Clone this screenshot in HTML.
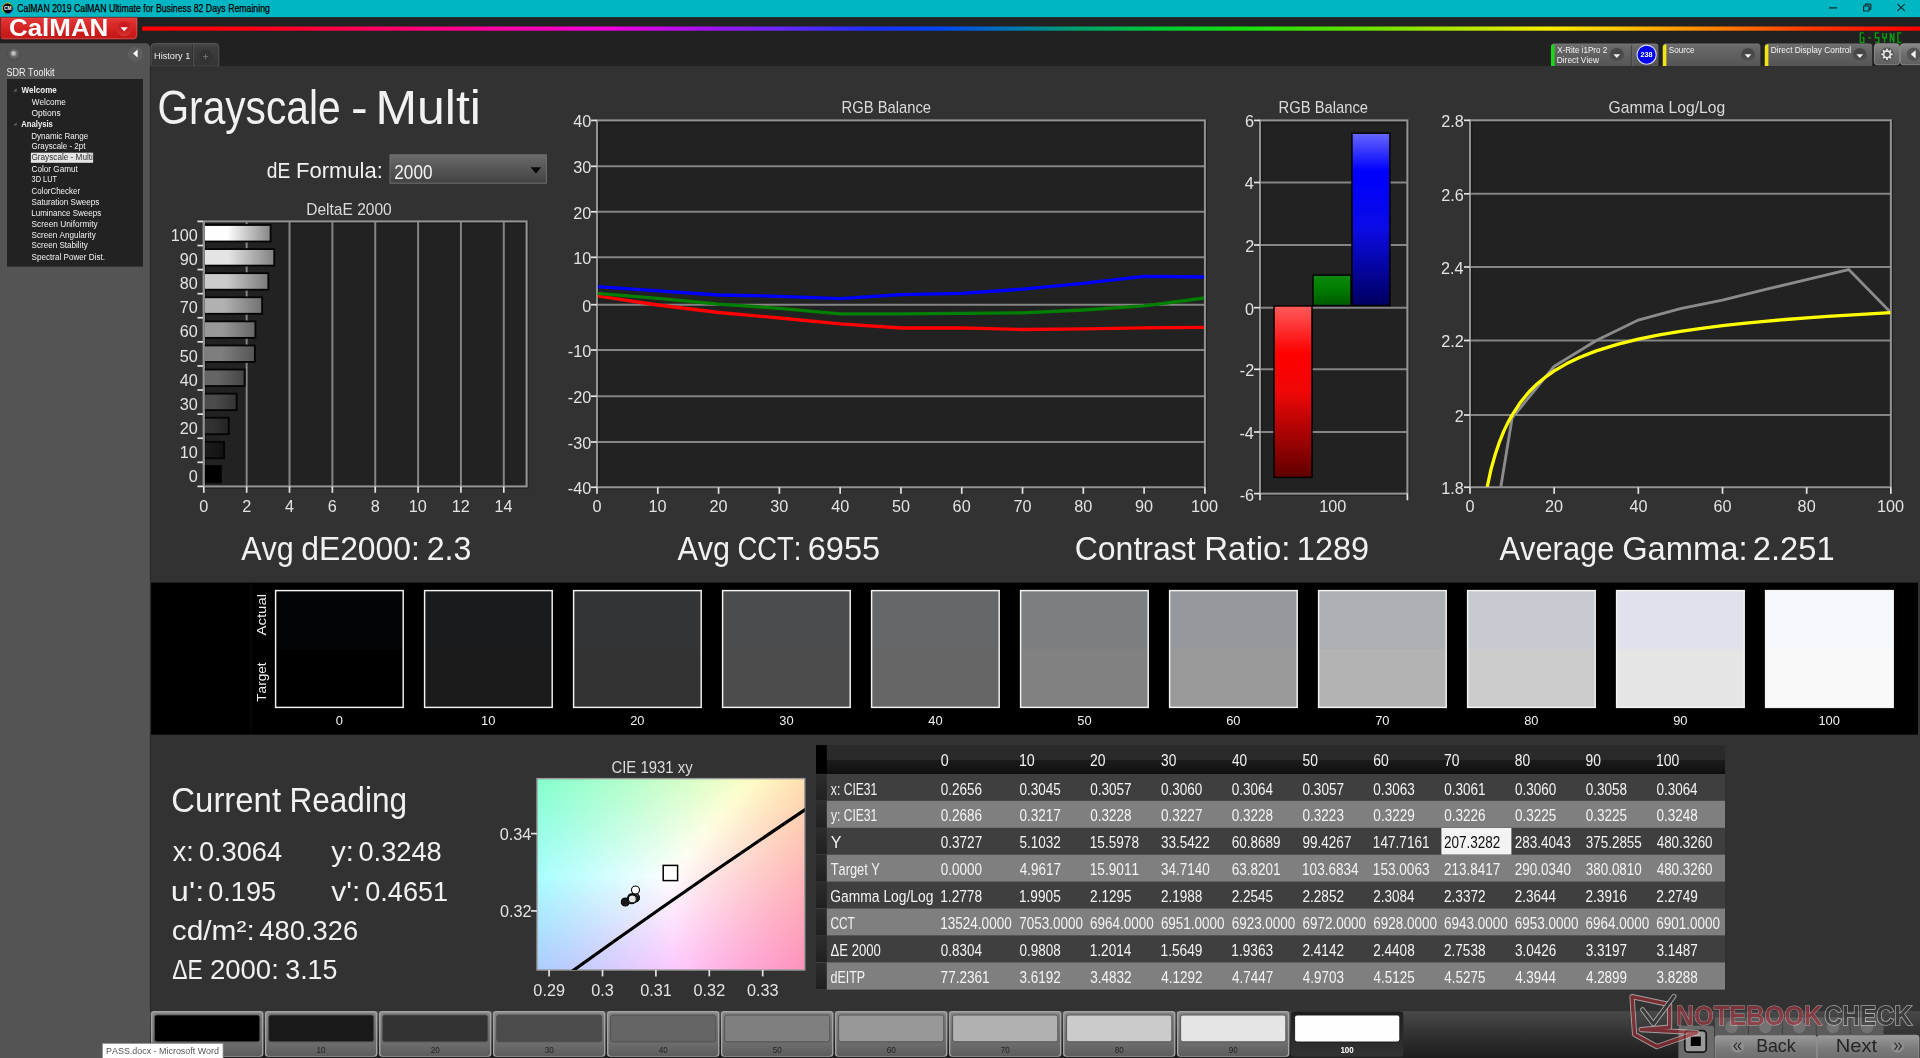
<!DOCTYPE html>
<html lang="en">
<head>
<meta charset="utf-8">
<title>CalMAN 2019 CalMAN Ultimate for Business - Grayscale - Multi</title>
<style>
html,body{margin:0;padding:0;background:#333333;overflow:hidden;}
body{width:1920px;height:1058px;font-family:"Liberation Sans",sans-serif;}
#app{position:absolute;left:0;top:0;width:1920px;height:1058px;overflow:hidden;}
svg{display:block;font-family:"Liberation Sans",sans-serif;}
svg text{font-family:"Liberation Sans",sans-serif;white-space:pre;font-kerning:none;}
</style>
</head>
<body>
<div id="app">
<svg width="1920" height="1058" viewBox="0 0 1920 1058" style="opacity:0.9999">
<defs>
<linearGradient id="icoRing" x1="0" y1="0" x2="1" y2="1">
<stop offset="0" stop-color="#ff3030"/><stop offset="0.35" stop-color="#ffe000"/><stop offset="0.6" stop-color="#20c020"/><stop offset="0.8" stop-color="#2040ff"/><stop offset="1" stop-color="#c020c0"/></linearGradient>
<linearGradient id="gRed" x1="0" y1="0" x2="0" y2="1">
<stop offset="0" stop-color="#e84848"/><stop offset="0.12" stop-color="#e03434"/><stop offset="0.55" stop-color="#d42222"/><stop offset="1" stop-color="#c41414"/></linearGradient>
<radialGradient id="gRedBtn" cx="0.5" cy="0.35" r="0.7">
<stop offset="0" stop-color="#c8101c"/><stop offset="0.7" stop-color="#d02828"/><stop offset="1" stop-color="#e04444"/></radialGradient>
<linearGradient id="gRainbow" x1="142" y1="0" x2="1920" y2="0" gradientUnits="userSpaceOnUse">
<stop offset="0" stop-color="#ff0000"/>
<stop offset="0.06" stop-color="#ff0014"/>
<stop offset="0.13" stop-color="#ff0060"/>
<stop offset="0.21" stop-color="#ff00b0"/>
<stop offset="0.265" stop-color="#f000e0"/>
<stop offset="0.31" stop-color="#b010f0"/>
<stop offset="0.36" stop-color="#6828f8"/>
<stop offset="0.41" stop-color="#2030ff"/>
<stop offset="0.45" stop-color="#0048f0"/>
<stop offset="0.49" stop-color="#0078b0"/>
<stop offset="0.525" stop-color="#00a070"/>
<stop offset="0.57" stop-color="#00c838"/>
<stop offset="0.62" stop-color="#18e010"/>
<stop offset="0.68" stop-color="#60e000"/>
<stop offset="0.74" stop-color="#b0e800"/>
<stop offset="0.79" stop-color="#f8f000"/>
<stop offset="0.83" stop-color="#ffc800"/>
<stop offset="0.88" stop-color="#ff8800"/>
<stop offset="0.94" stop-color="#ff3800"/>
<stop offset="1" stop-color="#ff0000"/>
</linearGradient>
<radialGradient id="gKnob" cx="0.5" cy="0.4" r="0.6">
<stop offset="0" stop-color="#8a8a8a"/><stop offset="0.45" stop-color="#6a6a6a"/><stop offset="1" stop-color="#4c4c4c"/></radialGradient>
<radialGradient id="gDot" cx="0.45" cy="0.4" r="0.6">
<stop offset="0" stop-color="#dcdcdc"/><stop offset="1" stop-color="#8c8c8c"/></radialGradient>
<linearGradient id="gTab" x1="0" y1="0" x2="0" y2="1">
<stop offset="0" stop-color="#4a4a4a"/><stop offset="0.2" stop-color="#3e3e3e"/><stop offset="1" stop-color="#343434"/></linearGradient>
<linearGradient id="gPanel" x1="0" y1="0" x2="0" y2="1">
<stop offset="0" stop-color="#767676"/><stop offset="0.12" stop-color="#6a6a6a"/><stop offset="1" stop-color="#565656"/></linearGradient>
<radialGradient id="gDrop" cx="0.5" cy="0.3" r="0.7">
<stop offset="0" stop-color="#444444"/><stop offset="0.75" stop-color="#4e4e4e"/><stop offset="1" stop-color="#626262"/></radialGradient>
<linearGradient id="gBtnL" x1="0" y1="0" x2="0" y2="1">
<stop offset="0" stop-color="#8a8a8a"/><stop offset="0.5" stop-color="#6e6e6e"/><stop offset="1" stop-color="#606060"/></linearGradient>
<linearGradient id="gCombo" x1="0" y1="0" x2="0" y2="1">
<stop offset="0" stop-color="#6c6c6c"/><stop offset="0.5" stop-color="#575757"/><stop offset="1" stop-color="#444444"/></linearGradient>
<linearGradient id="gB100" x1="0" y1="0" x2="1" y2="0"><stop offset="0" stop-color="rgb(255,255,255)"/><stop offset="0.35" stop-color="rgb(255,255,255)"/><stop offset="1" stop-color="rgb(135,135,135)"/></linearGradient>
<linearGradient id="gB90" x1="0" y1="0" x2="1" y2="0"><stop offset="0" stop-color="rgb(229,229,229)"/><stop offset="0.35" stop-color="rgb(229,229,229)"/><stop offset="1" stop-color="rgb(130,130,130)"/></linearGradient>
<linearGradient id="gB80" x1="0" y1="0" x2="1" y2="0"><stop offset="0" stop-color="rgb(204,204,204)"/><stop offset="0.35" stop-color="rgb(204,204,204)"/><stop offset="1" stop-color="rgb(123,123,123)"/></linearGradient>
<linearGradient id="gB70" x1="0" y1="0" x2="1" y2="0"><stop offset="0" stop-color="rgb(178,178,178)"/><stop offset="0.35" stop-color="rgb(178,178,178)"/><stop offset="1" stop-color="rgb(114,114,114)"/></linearGradient>
<linearGradient id="gB60" x1="0" y1="0" x2="1" y2="0"><stop offset="0" stop-color="rgb(153,153,153)"/><stop offset="0.35" stop-color="rgb(153,153,153)"/><stop offset="1" stop-color="rgb(104,104,104)"/></linearGradient>
<linearGradient id="gB50" x1="0" y1="0" x2="1" y2="0"><stop offset="0" stop-color="rgb(127,127,127)"/><stop offset="0.35" stop-color="rgb(127,127,127)"/><stop offset="1" stop-color="rgb(86,86,86)"/></linearGradient>
<linearGradient id="gB40" x1="0" y1="0" x2="1" y2="0"><stop offset="0" stop-color="rgb(102,102,102)"/><stop offset="0.35" stop-color="rgb(102,102,102)"/><stop offset="1" stop-color="rgb(69,69,69)"/></linearGradient>
<linearGradient id="gB30" x1="0" y1="0" x2="1" y2="0"><stop offset="0" stop-color="rgb(76,76,76)"/><stop offset="0.35" stop-color="rgb(76,76,76)"/><stop offset="1" stop-color="rgb(52,52,52)"/></linearGradient>
<linearGradient id="gB20" x1="0" y1="0" x2="1" y2="0"><stop offset="0" stop-color="rgb(51,51,51)"/><stop offset="0.35" stop-color="rgb(51,51,51)"/><stop offset="1" stop-color="rgb(35,35,35)"/></linearGradient>
<linearGradient id="gB10" x1="0" y1="0" x2="1" y2="0"><stop offset="0" stop-color="rgb(26,26,26)"/><stop offset="0.35" stop-color="rgb(26,26,26)"/><stop offset="1" stop-color="rgb(18,18,18)"/></linearGradient>
<linearGradient id="gB0" x1="0" y1="0" x2="1" y2="0"><stop offset="0" stop-color="rgb(0,0,0)"/><stop offset="0.35" stop-color="rgb(0,0,0)"/><stop offset="1" stop-color="rgb(0,0,0)"/></linearGradient>
<linearGradient id="gbR" x1="0" y1="0" x2="0" y2="1"><stop offset="0" stop-color="#ff5c5c"/><stop offset="0.28" stop-color="#ff0000"/><stop offset="0.5" stop-color="#f00808"/><stop offset="1" stop-color="#600000"/></linearGradient>
<linearGradient id="gbG" x1="0" y1="0" x2="0" y2="1"><stop offset="0" stop-color="#108a10"/><stop offset="0.4" stop-color="#008000"/><stop offset="1" stop-color="#005c00"/></linearGradient>
<linearGradient id="gbB" x1="0" y1="0" x2="0" y2="1"><stop offset="0" stop-color="#6868ff"/><stop offset="0.22" stop-color="#0000ff"/><stop offset="0.55" stop-color="#0c0ce8"/><stop offset="1" stop-color="#000060"/></linearGradient>
<linearGradient id="c0" x1="0" y1="0" x2="1" y2="0"><stop offset="0.0000" stop-color="#86ffce"/><stop offset="0.0625" stop-color="#8fffce"/><stop offset="0.1250" stop-color="#97ffcd"/><stop offset="0.1875" stop-color="#a0ffcd"/><stop offset="0.2500" stop-color="#a9ffcd"/><stop offset="0.3125" stop-color="#b2ffcc"/><stop offset="0.3750" stop-color="#bcffcc"/><stop offset="0.4375" stop-color="#c5ffcb"/><stop offset="0.5000" stop-color="#cfffcb"/><stop offset="0.5625" stop-color="#d9ffca"/><stop offset="0.6250" stop-color="#e3ffca"/><stop offset="0.6875" stop-color="#edffca"/><stop offset="0.7500" stop-color="#f7ffc9"/><stop offset="0.8125" stop-color="#fffcc7"/><stop offset="0.8750" stop-color="#fff2be"/><stop offset="0.9375" stop-color="#ffe9b6"/><stop offset="1.0000" stop-color="#ffe0af"/></linearGradient>
<linearGradient id="c1" x1="0" y1="0" x2="1" y2="0"><stop offset="0.0000" stop-color="#87ffd0"/><stop offset="0.0625" stop-color="#90ffcf"/><stop offset="0.1250" stop-color="#99ffcf"/><stop offset="0.1875" stop-color="#a2ffcf"/><stop offset="0.2500" stop-color="#abffce"/><stop offset="0.3125" stop-color="#b4ffce"/><stop offset="0.3750" stop-color="#bdffce"/><stop offset="0.4375" stop-color="#c7ffcd"/><stop offset="0.5000" stop-color="#d1ffcd"/><stop offset="0.5625" stop-color="#dbffcc"/><stop offset="0.6250" stop-color="#e5ffcc"/><stop offset="0.6875" stop-color="#efffcc"/><stop offset="0.7500" stop-color="#f9ffcb"/><stop offset="0.8125" stop-color="#fffac7"/><stop offset="0.8750" stop-color="#fff0bf"/><stop offset="0.9375" stop-color="#ffe7b7"/><stop offset="1.0000" stop-color="#ffdeaf"/></linearGradient>
<linearGradient id="c2" x1="0" y1="0" x2="1" y2="0"><stop offset="0.0000" stop-color="#89ffd2"/><stop offset="0.0625" stop-color="#91ffd1"/><stop offset="0.1250" stop-color="#9affd1"/><stop offset="0.1875" stop-color="#a3ffd1"/><stop offset="0.2500" stop-color="#acffd0"/><stop offset="0.3125" stop-color="#b6ffd0"/><stop offset="0.3750" stop-color="#bfffd0"/><stop offset="0.4375" stop-color="#c9ffcf"/><stop offset="0.5000" stop-color="#d3ffcf"/><stop offset="0.5625" stop-color="#dcffce"/><stop offset="0.6250" stop-color="#e7ffce"/><stop offset="0.6875" stop-color="#f1ffce"/><stop offset="0.7500" stop-color="#fbffcd"/><stop offset="0.8125" stop-color="#fff8c7"/><stop offset="0.8750" stop-color="#ffeebf"/><stop offset="0.9375" stop-color="#ffe5b7"/><stop offset="1.0000" stop-color="#ffdcb0"/></linearGradient>
<linearGradient id="c3" x1="0" y1="0" x2="1" y2="0"><stop offset="0.0000" stop-color="#8affd4"/><stop offset="0.0625" stop-color="#93ffd3"/><stop offset="0.1250" stop-color="#9cffd3"/><stop offset="0.1875" stop-color="#a5ffd3"/><stop offset="0.2500" stop-color="#aeffd2"/><stop offset="0.3125" stop-color="#b7ffd2"/><stop offset="0.3750" stop-color="#c1ffd1"/><stop offset="0.4375" stop-color="#caffd1"/><stop offset="0.5000" stop-color="#d4ffd1"/><stop offset="0.5625" stop-color="#deffd0"/><stop offset="0.6250" stop-color="#e9ffd0"/><stop offset="0.6875" stop-color="#f3ffd0"/><stop offset="0.7500" stop-color="#fdffcf"/><stop offset="0.8125" stop-color="#fff6c8"/><stop offset="0.8750" stop-color="#ffecbf"/><stop offset="0.9375" stop-color="#ffe3b7"/><stop offset="1.0000" stop-color="#ffdab0"/></linearGradient>
<linearGradient id="c4" x1="0" y1="0" x2="1" y2="0"><stop offset="0.0000" stop-color="#8bffd5"/><stop offset="0.0625" stop-color="#94ffd5"/><stop offset="0.1250" stop-color="#9dffd5"/><stop offset="0.1875" stop-color="#a6ffd4"/><stop offset="0.2500" stop-color="#b0ffd4"/><stop offset="0.3125" stop-color="#b9ffd4"/><stop offset="0.3750" stop-color="#c3ffd3"/><stop offset="0.4375" stop-color="#ccffd3"/><stop offset="0.5000" stop-color="#d6ffd3"/><stop offset="0.5625" stop-color="#e0ffd2"/><stop offset="0.6250" stop-color="#ebffd2"/><stop offset="0.6875" stop-color="#f5ffd2"/><stop offset="0.7500" stop-color="#fffed1"/><stop offset="0.8125" stop-color="#fff4c8"/><stop offset="0.8750" stop-color="#ffeac0"/><stop offset="0.9375" stop-color="#ffe1b8"/><stop offset="1.0000" stop-color="#ffd9b0"/></linearGradient>
<linearGradient id="c5" x1="0" y1="0" x2="1" y2="0"><stop offset="0.0000" stop-color="#8dffd7"/><stop offset="0.0625" stop-color="#96ffd7"/><stop offset="0.1250" stop-color="#9fffd7"/><stop offset="0.1875" stop-color="#a8ffd6"/><stop offset="0.2500" stop-color="#b1ffd6"/><stop offset="0.3125" stop-color="#bbffd6"/><stop offset="0.3750" stop-color="#c4ffd5"/><stop offset="0.4375" stop-color="#ceffd5"/><stop offset="0.5000" stop-color="#d8ffd5"/><stop offset="0.5625" stop-color="#e2ffd4"/><stop offset="0.6250" stop-color="#edffd4"/><stop offset="0.6875" stop-color="#f7ffd4"/><stop offset="0.7500" stop-color="#fffcd1"/><stop offset="0.8125" stop-color="#fff2c8"/><stop offset="0.8750" stop-color="#ffe8c0"/><stop offset="0.9375" stop-color="#ffdfb8"/><stop offset="1.0000" stop-color="#ffd7b1"/></linearGradient>
<linearGradient id="c6" x1="0" y1="0" x2="1" y2="0"><stop offset="0.0000" stop-color="#8effd9"/><stop offset="0.0625" stop-color="#97ffd9"/><stop offset="0.1250" stop-color="#a0ffd9"/><stop offset="0.1875" stop-color="#a9ffd8"/><stop offset="0.2500" stop-color="#b3ffd8"/><stop offset="0.3125" stop-color="#bcffd8"/><stop offset="0.3750" stop-color="#c6ffd7"/><stop offset="0.4375" stop-color="#d0ffd7"/><stop offset="0.5000" stop-color="#daffd7"/><stop offset="0.5625" stop-color="#e4ffd6"/><stop offset="0.6250" stop-color="#efffd6"/><stop offset="0.6875" stop-color="#f9ffd6"/><stop offset="0.7500" stop-color="#fffad1"/><stop offset="0.8125" stop-color="#fff0c8"/><stop offset="0.8750" stop-color="#ffe7c0"/><stop offset="0.9375" stop-color="#ffdeb8"/><stop offset="1.0000" stop-color="#ffd5b1"/></linearGradient>
<linearGradient id="c7" x1="0" y1="0" x2="1" y2="0"><stop offset="0.0000" stop-color="#90ffdb"/><stop offset="0.0625" stop-color="#98ffdb"/><stop offset="0.1250" stop-color="#a2ffdb"/><stop offset="0.1875" stop-color="#abffda"/><stop offset="0.2500" stop-color="#b4ffda"/><stop offset="0.3125" stop-color="#beffda"/><stop offset="0.3750" stop-color="#c8ffd9"/><stop offset="0.4375" stop-color="#d2ffd9"/><stop offset="0.5000" stop-color="#dcffd9"/><stop offset="0.5625" stop-color="#e6ffd8"/><stop offset="0.6250" stop-color="#f1ffd8"/><stop offset="0.6875" stop-color="#fbffd8"/><stop offset="0.7500" stop-color="#fff8d2"/><stop offset="0.8125" stop-color="#ffeec9"/><stop offset="0.8750" stop-color="#ffe5c1"/><stop offset="0.9375" stop-color="#ffdcb9"/><stop offset="1.0000" stop-color="#ffd3b1"/></linearGradient>
<linearGradient id="c8" x1="0" y1="0" x2="1" y2="0"><stop offset="0.0000" stop-color="#91ffdd"/><stop offset="0.0625" stop-color="#9affdd"/><stop offset="0.1250" stop-color="#a3ffdd"/><stop offset="0.1875" stop-color="#adffdc"/><stop offset="0.2500" stop-color="#b6ffdc"/><stop offset="0.3125" stop-color="#c0ffdc"/><stop offset="0.3750" stop-color="#caffdb"/><stop offset="0.4375" stop-color="#d4ffdb"/><stop offset="0.5000" stop-color="#deffdb"/><stop offset="0.5625" stop-color="#e8ffdb"/><stop offset="0.6250" stop-color="#f3ffda"/><stop offset="0.6875" stop-color="#fdffda"/><stop offset="0.7500" stop-color="#fff6d2"/><stop offset="0.8125" stop-color="#ffecc9"/><stop offset="0.8750" stop-color="#ffe3c1"/><stop offset="0.9375" stop-color="#ffdab9"/><stop offset="1.0000" stop-color="#ffd2b2"/></linearGradient>
<linearGradient id="c9" x1="0" y1="0" x2="1" y2="0"><stop offset="0.0000" stop-color="#92ffdf"/><stop offset="0.0625" stop-color="#9bffdf"/><stop offset="0.1250" stop-color="#a5ffdf"/><stop offset="0.1875" stop-color="#aeffde"/><stop offset="0.2500" stop-color="#b8ffde"/><stop offset="0.3125" stop-color="#c1ffde"/><stop offset="0.3750" stop-color="#cbffdd"/><stop offset="0.4375" stop-color="#d5ffdd"/><stop offset="0.5000" stop-color="#e0ffdd"/><stop offset="0.5625" stop-color="#eaffdd"/><stop offset="0.6250" stop-color="#f5ffdc"/><stop offset="0.6875" stop-color="#fffedc"/><stop offset="0.7500" stop-color="#fff4d2"/><stop offset="0.8125" stop-color="#ffeac9"/><stop offset="0.8750" stop-color="#ffe1c1"/><stop offset="0.9375" stop-color="#ffd8b9"/><stop offset="1.0000" stop-color="#ffd0b2"/></linearGradient>
<linearGradient id="c10" x1="0" y1="0" x2="1" y2="0"><stop offset="0.0000" stop-color="#94ffe1"/><stop offset="0.0625" stop-color="#9dffe1"/><stop offset="0.1250" stop-color="#a6ffe1"/><stop offset="0.1875" stop-color="#b0ffe0"/><stop offset="0.2500" stop-color="#b9ffe0"/><stop offset="0.3125" stop-color="#c3ffe0"/><stop offset="0.3750" stop-color="#cdffe0"/><stop offset="0.4375" stop-color="#d7ffdf"/><stop offset="0.5000" stop-color="#e2ffdf"/><stop offset="0.5625" stop-color="#ecffdf"/><stop offset="0.6250" stop-color="#f7ffde"/><stop offset="0.6875" stop-color="#fffcdc"/><stop offset="0.7500" stop-color="#fff2d2"/><stop offset="0.8125" stop-color="#ffe8ca"/><stop offset="0.8750" stop-color="#ffdfc1"/><stop offset="0.9375" stop-color="#ffd6ba"/><stop offset="1.0000" stop-color="#ffceb2"/></linearGradient>
<linearGradient id="c11" x1="0" y1="0" x2="1" y2="0"><stop offset="0.0000" stop-color="#95ffe3"/><stop offset="0.0625" stop-color="#9effe3"/><stop offset="0.1250" stop-color="#a8ffe3"/><stop offset="0.1875" stop-color="#b1ffe2"/><stop offset="0.2500" stop-color="#bbffe2"/><stop offset="0.3125" stop-color="#c5ffe2"/><stop offset="0.3750" stop-color="#cfffe2"/><stop offset="0.4375" stop-color="#d9ffe1"/><stop offset="0.5000" stop-color="#e4ffe1"/><stop offset="0.5625" stop-color="#eeffe1"/><stop offset="0.6250" stop-color="#f9ffe1"/><stop offset="0.6875" stop-color="#fffadc"/><stop offset="0.7500" stop-color="#fff0d3"/><stop offset="0.8125" stop-color="#ffe6ca"/><stop offset="0.8750" stop-color="#ffddc2"/><stop offset="0.9375" stop-color="#ffd5ba"/><stop offset="1.0000" stop-color="#ffccb3"/></linearGradient>
<linearGradient id="c12" x1="0" y1="0" x2="1" y2="0"><stop offset="0.0000" stop-color="#97ffe5"/><stop offset="0.0625" stop-color="#a0ffe5"/><stop offset="0.1250" stop-color="#a9ffe5"/><stop offset="0.1875" stop-color="#b3ffe4"/><stop offset="0.2500" stop-color="#bdffe4"/><stop offset="0.3125" stop-color="#c7ffe4"/><stop offset="0.3750" stop-color="#d1ffe4"/><stop offset="0.4375" stop-color="#dbffe4"/><stop offset="0.5000" stop-color="#e6ffe3"/><stop offset="0.5625" stop-color="#f0ffe3"/><stop offset="0.6250" stop-color="#fbffe3"/><stop offset="0.6875" stop-color="#fff8dc"/><stop offset="0.7500" stop-color="#ffeed3"/><stop offset="0.8125" stop-color="#ffe4ca"/><stop offset="0.8750" stop-color="#ffdbc2"/><stop offset="0.9375" stop-color="#ffd3ba"/><stop offset="1.0000" stop-color="#ffcbb3"/></linearGradient>
<linearGradient id="c13" x1="0" y1="0" x2="1" y2="0"><stop offset="0.0000" stop-color="#98ffe7"/><stop offset="0.0625" stop-color="#a2ffe7"/><stop offset="0.1250" stop-color="#abffe7"/><stop offset="0.1875" stop-color="#b5ffe6"/><stop offset="0.2500" stop-color="#bfffe6"/><stop offset="0.3125" stop-color="#c9ffe6"/><stop offset="0.3750" stop-color="#d3ffe6"/><stop offset="0.4375" stop-color="#ddffe6"/><stop offset="0.5000" stop-color="#e8ffe5"/><stop offset="0.5625" stop-color="#f2ffe5"/><stop offset="0.6250" stop-color="#fdffe5"/><stop offset="0.6875" stop-color="#fff6dd"/><stop offset="0.7500" stop-color="#ffecd3"/><stop offset="0.8125" stop-color="#ffe2cb"/><stop offset="0.8750" stop-color="#ffd9c2"/><stop offset="0.9375" stop-color="#ffd1bb"/><stop offset="1.0000" stop-color="#ffc9b3"/></linearGradient>
<linearGradient id="c14" x1="0" y1="0" x2="1" y2="0"><stop offset="0.0000" stop-color="#9affe9"/><stop offset="0.0625" stop-color="#a3ffe9"/><stop offset="0.1250" stop-color="#adffe9"/><stop offset="0.1875" stop-color="#b6ffe9"/><stop offset="0.2500" stop-color="#c0ffe8"/><stop offset="0.3125" stop-color="#caffe8"/><stop offset="0.3750" stop-color="#d5ffe8"/><stop offset="0.4375" stop-color="#dfffe8"/><stop offset="0.5000" stop-color="#eaffe8"/><stop offset="0.5625" stop-color="#f5ffe7"/><stop offset="0.6250" stop-color="#fffee7"/><stop offset="0.6875" stop-color="#fff4dd"/><stop offset="0.7500" stop-color="#ffead4"/><stop offset="0.8125" stop-color="#ffe0cb"/><stop offset="0.8750" stop-color="#ffd8c3"/><stop offset="0.9375" stop-color="#ffcfbb"/><stop offset="1.0000" stop-color="#ffc7b4"/></linearGradient>
<linearGradient id="c15" x1="0" y1="0" x2="1" y2="0"><stop offset="0.0000" stop-color="#9bffeb"/><stop offset="0.0625" stop-color="#a5ffeb"/><stop offset="0.1250" stop-color="#aeffeb"/><stop offset="0.1875" stop-color="#b8ffeb"/><stop offset="0.2500" stop-color="#c2ffeb"/><stop offset="0.3125" stop-color="#ccffea"/><stop offset="0.3750" stop-color="#d7ffea"/><stop offset="0.4375" stop-color="#e1ffea"/><stop offset="0.5000" stop-color="#ecffea"/><stop offset="0.5625" stop-color="#f7ffea"/><stop offset="0.6250" stop-color="#fffce7"/><stop offset="0.6875" stop-color="#fff2dd"/><stop offset="0.7500" stop-color="#ffe8d4"/><stop offset="0.8125" stop-color="#ffdecb"/><stop offset="0.8750" stop-color="#ffd6c3"/><stop offset="0.9375" stop-color="#ffcdbb"/><stop offset="1.0000" stop-color="#ffc6b4"/></linearGradient>
<linearGradient id="c16" x1="0" y1="0" x2="1" y2="0"><stop offset="0.0000" stop-color="#9dffed"/><stop offset="0.0625" stop-color="#a6ffed"/><stop offset="0.1250" stop-color="#b0ffed"/><stop offset="0.1875" stop-color="#baffed"/><stop offset="0.2500" stop-color="#c4ffed"/><stop offset="0.3125" stop-color="#ceffed"/><stop offset="0.3750" stop-color="#d8ffec"/><stop offset="0.4375" stop-color="#e3ffec"/><stop offset="0.5000" stop-color="#eeffec"/><stop offset="0.5625" stop-color="#f9ffec"/><stop offset="0.6250" stop-color="#fffae7"/><stop offset="0.6875" stop-color="#fff0dd"/><stop offset="0.7500" stop-color="#ffe6d4"/><stop offset="0.8125" stop-color="#ffddcc"/><stop offset="0.8750" stop-color="#ffd4c3"/><stop offset="0.9375" stop-color="#ffccbc"/><stop offset="1.0000" stop-color="#ffc4b4"/></linearGradient>
<linearGradient id="c17" x1="0" y1="0" x2="1" y2="0"><stop offset="0.0000" stop-color="#9effef"/><stop offset="0.0625" stop-color="#a8ffef"/><stop offset="0.1250" stop-color="#b2ffef"/><stop offset="0.1875" stop-color="#bcffef"/><stop offset="0.2500" stop-color="#c6ffef"/><stop offset="0.3125" stop-color="#d0ffef"/><stop offset="0.3750" stop-color="#daffef"/><stop offset="0.4375" stop-color="#e5ffef"/><stop offset="0.5000" stop-color="#f0ffee"/><stop offset="0.5625" stop-color="#fbffee"/><stop offset="0.6250" stop-color="#fff8e8"/><stop offset="0.6875" stop-color="#ffeede"/><stop offset="0.7500" stop-color="#ffe4d4"/><stop offset="0.8125" stop-color="#ffdbcc"/><stop offset="0.8750" stop-color="#ffd2c4"/><stop offset="0.9375" stop-color="#ffcabc"/><stop offset="1.0000" stop-color="#ffc2b5"/></linearGradient>
<linearGradient id="c18" x1="0" y1="0" x2="1" y2="0"><stop offset="0.0000" stop-color="#a0fff2"/><stop offset="0.0625" stop-color="#aafff1"/><stop offset="0.1250" stop-color="#b3fff1"/><stop offset="0.1875" stop-color="#bdfff1"/><stop offset="0.2500" stop-color="#c8fff1"/><stop offset="0.3125" stop-color="#d2fff1"/><stop offset="0.3750" stop-color="#dcfff1"/><stop offset="0.4375" stop-color="#e7fff1"/><stop offset="0.5000" stop-color="#f2fff1"/><stop offset="0.5625" stop-color="#fdfff1"/><stop offset="0.6250" stop-color="#fff6e8"/><stop offset="0.6875" stop-color="#ffebde"/><stop offset="0.7500" stop-color="#ffe2d5"/><stop offset="0.8125" stop-color="#ffd9cc"/><stop offset="0.8750" stop-color="#ffd0c4"/><stop offset="0.9375" stop-color="#ffc8bc"/><stop offset="1.0000" stop-color="#ffc1b5"/></linearGradient>
<linearGradient id="c19" x1="0" y1="0" x2="1" y2="0"><stop offset="0.0000" stop-color="#a1fff4"/><stop offset="0.0625" stop-color="#abfff4"/><stop offset="0.1250" stop-color="#b5fff4"/><stop offset="0.1875" stop-color="#bffff3"/><stop offset="0.2500" stop-color="#c9fff3"/><stop offset="0.3125" stop-color="#d4fff3"/><stop offset="0.3750" stop-color="#defff3"/><stop offset="0.4375" stop-color="#e9fff3"/><stop offset="0.5000" stop-color="#f4fff3"/><stop offset="0.5625" stop-color="#fffff3"/><stop offset="0.6250" stop-color="#fff4e8"/><stop offset="0.6875" stop-color="#ffe9de"/><stop offset="0.7500" stop-color="#ffe0d5"/><stop offset="0.8125" stop-color="#ffd7cc"/><stop offset="0.8750" stop-color="#ffcec4"/><stop offset="0.9375" stop-color="#ffc7bd"/><stop offset="1.0000" stop-color="#ffbfb5"/></linearGradient>
<linearGradient id="c20" x1="0" y1="0" x2="1" y2="0"><stop offset="0.0000" stop-color="#a3fff6"/><stop offset="0.0625" stop-color="#adfff6"/><stop offset="0.1250" stop-color="#b7fff6"/><stop offset="0.1875" stop-color="#c1fff6"/><stop offset="0.2500" stop-color="#cbfff6"/><stop offset="0.3125" stop-color="#d6fff6"/><stop offset="0.3750" stop-color="#e0fff6"/><stop offset="0.4375" stop-color="#ebfff5"/><stop offset="0.5000" stop-color="#f6fff5"/><stop offset="0.5625" stop-color="#fffcf3"/><stop offset="0.6250" stop-color="#fff1e8"/><stop offset="0.6875" stop-color="#ffe7de"/><stop offset="0.7500" stop-color="#ffded5"/><stop offset="0.8125" stop-color="#ffd5cd"/><stop offset="0.8750" stop-color="#ffcdc5"/><stop offset="0.9375" stop-color="#ffc5bd"/><stop offset="1.0000" stop-color="#ffbdb6"/></linearGradient>
<linearGradient id="c21" x1="0" y1="0" x2="1" y2="0"><stop offset="0.0000" stop-color="#a5fff8"/><stop offset="0.0625" stop-color="#affff8"/><stop offset="0.1250" stop-color="#b9fff8"/><stop offset="0.1875" stop-color="#c3fff8"/><stop offset="0.2500" stop-color="#cdfff8"/><stop offset="0.3125" stop-color="#d8fff8"/><stop offset="0.3750" stop-color="#e2fff8"/><stop offset="0.4375" stop-color="#edfff8"/><stop offset="0.5000" stop-color="#f9fff8"/><stop offset="0.5625" stop-color="#fffaf3"/><stop offset="0.6250" stop-color="#ffefe9"/><stop offset="0.6875" stop-color="#ffe5df"/><stop offset="0.7500" stop-color="#ffdcd6"/><stop offset="0.8125" stop-color="#ffd3cd"/><stop offset="0.8750" stop-color="#ffcbc5"/><stop offset="0.9375" stop-color="#ffc3bd"/><stop offset="1.0000" stop-color="#ffbcb6"/></linearGradient>
<linearGradient id="c22" x1="0" y1="0" x2="1" y2="0"><stop offset="0.0000" stop-color="#a6fffa"/><stop offset="0.0625" stop-color="#b0fffa"/><stop offset="0.1250" stop-color="#bafffa"/><stop offset="0.1875" stop-color="#c5fffa"/><stop offset="0.2500" stop-color="#cffffa"/><stop offset="0.3125" stop-color="#dafffa"/><stop offset="0.3750" stop-color="#e5fffa"/><stop offset="0.4375" stop-color="#f0fffa"/><stop offset="0.5000" stop-color="#fbfffa"/><stop offset="0.5625" stop-color="#fff8f3"/><stop offset="0.6250" stop-color="#ffede9"/><stop offset="0.6875" stop-color="#ffe3df"/><stop offset="0.7500" stop-color="#ffdad6"/><stop offset="0.8125" stop-color="#ffd1cd"/><stop offset="0.8750" stop-color="#ffc9c5"/><stop offset="0.9375" stop-color="#ffc1be"/><stop offset="1.0000" stop-color="#ffbab6"/></linearGradient>
<linearGradient id="c23" x1="0" y1="0" x2="1" y2="0"><stop offset="0.0000" stop-color="#a8fffd"/><stop offset="0.0625" stop-color="#b2fffd"/><stop offset="0.1250" stop-color="#bcfffd"/><stop offset="0.1875" stop-color="#c6fffd"/><stop offset="0.2500" stop-color="#d1fffd"/><stop offset="0.3125" stop-color="#dcfffd"/><stop offset="0.3750" stop-color="#e7fffd"/><stop offset="0.4375" stop-color="#f2fffd"/><stop offset="0.5000" stop-color="#fdfffd"/><stop offset="0.5625" stop-color="#fff6f3"/><stop offset="0.6250" stop-color="#ffebe9"/><stop offset="0.6875" stop-color="#ffe1df"/><stop offset="0.7500" stop-color="#ffd8d6"/><stop offset="0.8125" stop-color="#ffd0ce"/><stop offset="0.8750" stop-color="#ffc7c6"/><stop offset="0.9375" stop-color="#ffc0be"/><stop offset="1.0000" stop-color="#ffb8b7"/></linearGradient>
<linearGradient id="c24" x1="0" y1="0" x2="1" y2="0"><stop offset="0.0000" stop-color="#aaffff"/><stop offset="0.0625" stop-color="#b4ffff"/><stop offset="0.1250" stop-color="#beffff"/><stop offset="0.1875" stop-color="#c8ffff"/><stop offset="0.2500" stop-color="#d3ffff"/><stop offset="0.3125" stop-color="#deffff"/><stop offset="0.3750" stop-color="#e9ffff"/><stop offset="0.4375" stop-color="#f4ffff"/><stop offset="0.5000" stop-color="#ffffff"/><stop offset="0.5625" stop-color="#fff3f4"/><stop offset="0.6250" stop-color="#ffe9e9"/><stop offset="0.6875" stop-color="#ffdfe0"/><stop offset="0.7500" stop-color="#ffd6d6"/><stop offset="0.8125" stop-color="#ffcece"/><stop offset="0.8750" stop-color="#ffc6c6"/><stop offset="0.9375" stop-color="#ffbebe"/><stop offset="1.0000" stop-color="#ffb7b7"/></linearGradient>
<linearGradient id="c25" x1="0" y1="0" x2="1" y2="0"><stop offset="0.0000" stop-color="#aafdff"/><stop offset="0.0625" stop-color="#b4fdff"/><stop offset="0.1250" stop-color="#befdff"/><stop offset="0.1875" stop-color="#c8fdff"/><stop offset="0.2500" stop-color="#d3fdff"/><stop offset="0.3125" stop-color="#defdff"/><stop offset="0.3750" stop-color="#e9fdff"/><stop offset="0.4375" stop-color="#f4fcff"/><stop offset="0.5000" stop-color="#fffcff"/><stop offset="0.5625" stop-color="#fff1f4"/><stop offset="0.6250" stop-color="#ffe7e9"/><stop offset="0.6875" stop-color="#ffdde0"/><stop offset="0.7500" stop-color="#ffd4d7"/><stop offset="0.8125" stop-color="#ffccce"/><stop offset="0.8750" stop-color="#ffc4c6"/><stop offset="0.9375" stop-color="#ffbcbf"/><stop offset="1.0000" stop-color="#ffb5b7"/></linearGradient>
<linearGradient id="c26" x1="0" y1="0" x2="1" y2="0"><stop offset="0.0000" stop-color="#aafaff"/><stop offset="0.0625" stop-color="#b4faff"/><stop offset="0.1250" stop-color="#befaff"/><stop offset="0.1875" stop-color="#c8faff"/><stop offset="0.2500" stop-color="#d3faff"/><stop offset="0.3125" stop-color="#defaff"/><stop offset="0.3750" stop-color="#e9faff"/><stop offset="0.4375" stop-color="#f4faff"/><stop offset="0.5000" stop-color="#fffaff"/><stop offset="0.5625" stop-color="#ffeff4"/><stop offset="0.6250" stop-color="#ffe5ea"/><stop offset="0.6875" stop-color="#ffdbe0"/><stop offset="0.7500" stop-color="#ffd2d7"/><stop offset="0.8125" stop-color="#ffcace"/><stop offset="0.8750" stop-color="#ffc2c6"/><stop offset="0.9375" stop-color="#ffbbbf"/><stop offset="1.0000" stop-color="#ffb4b8"/></linearGradient>
<linearGradient id="c27" x1="0" y1="0" x2="1" y2="0"><stop offset="0.0000" stop-color="#aaf8ff"/><stop offset="0.0625" stop-color="#b4f8ff"/><stop offset="0.1250" stop-color="#bef8ff"/><stop offset="0.1875" stop-color="#c8f8ff"/><stop offset="0.2500" stop-color="#d3f8ff"/><stop offset="0.3125" stop-color="#def8ff"/><stop offset="0.3750" stop-color="#e8f8ff"/><stop offset="0.4375" stop-color="#f4f8ff"/><stop offset="0.5000" stop-color="#fff8ff"/><stop offset="0.5625" stop-color="#ffedf4"/><stop offset="0.6250" stop-color="#ffe3ea"/><stop offset="0.6875" stop-color="#ffd9e0"/><stop offset="0.7500" stop-color="#ffd1d7"/><stop offset="0.8125" stop-color="#ffc8cf"/><stop offset="0.8750" stop-color="#ffc0c7"/><stop offset="0.9375" stop-color="#ffb9bf"/><stop offset="1.0000" stop-color="#ffb2b8"/></linearGradient>
<linearGradient id="c28" x1="0" y1="0" x2="1" y2="0"><stop offset="0.0000" stop-color="#aaf6ff"/><stop offset="0.0625" stop-color="#b4f6ff"/><stop offset="0.1250" stop-color="#bef6ff"/><stop offset="0.1875" stop-color="#c8f6ff"/><stop offset="0.2500" stop-color="#d3f6ff"/><stop offset="0.3125" stop-color="#def5ff"/><stop offset="0.3750" stop-color="#e8f5ff"/><stop offset="0.4375" stop-color="#f3f5ff"/><stop offset="0.5000" stop-color="#fff5ff"/><stop offset="0.5625" stop-color="#ffebf4"/><stop offset="0.6250" stop-color="#ffe1ea"/><stop offset="0.6875" stop-color="#ffd8e1"/><stop offset="0.7500" stop-color="#ffcfd8"/><stop offset="0.8125" stop-color="#ffc7cf"/><stop offset="0.8750" stop-color="#ffbfc7"/><stop offset="0.9375" stop-color="#ffb7c0"/><stop offset="1.0000" stop-color="#ffb1b8"/></linearGradient>
<linearGradient id="c29" x1="0" y1="0" x2="1" y2="0"><stop offset="0.0000" stop-color="#aaf4ff"/><stop offset="0.0625" stop-color="#b4f4ff"/><stop offset="0.1250" stop-color="#bef4ff"/><stop offset="0.1875" stop-color="#c9f3ff"/><stop offset="0.2500" stop-color="#d3f3ff"/><stop offset="0.3125" stop-color="#def3ff"/><stop offset="0.3750" stop-color="#e8f3ff"/><stop offset="0.4375" stop-color="#f3f3ff"/><stop offset="0.5000" stop-color="#fef3ff"/><stop offset="0.5625" stop-color="#ffe9f5"/><stop offset="0.6250" stop-color="#ffdfea"/><stop offset="0.6875" stop-color="#ffd6e1"/><stop offset="0.7500" stop-color="#ffcdd8"/><stop offset="0.8125" stop-color="#ffc5cf"/><stop offset="0.8750" stop-color="#ffbdc7"/><stop offset="0.9375" stop-color="#ffb6c0"/><stop offset="1.0000" stop-color="#ffafb9"/></linearGradient>
<linearGradient id="c30" x1="0" y1="0" x2="1" y2="0"><stop offset="0.0000" stop-color="#abf2ff"/><stop offset="0.0625" stop-color="#b4f1ff"/><stop offset="0.1250" stop-color="#bef1ff"/><stop offset="0.1875" stop-color="#c9f1ff"/><stop offset="0.2500" stop-color="#d3f1ff"/><stop offset="0.3125" stop-color="#ddf1ff"/><stop offset="0.3750" stop-color="#e8f1ff"/><stop offset="0.4375" stop-color="#f3f1ff"/><stop offset="0.5000" stop-color="#fef0ff"/><stop offset="0.5625" stop-color="#ffe7f5"/><stop offset="0.6250" stop-color="#ffddeb"/><stop offset="0.6875" stop-color="#ffd4e1"/><stop offset="0.7500" stop-color="#ffcbd8"/><stop offset="0.8125" stop-color="#ffc3d0"/><stop offset="0.8750" stop-color="#ffbbc8"/><stop offset="0.9375" stop-color="#ffb4c0"/><stop offset="1.0000" stop-color="#ffadb9"/></linearGradient>
<linearGradient id="c31" x1="0" y1="0" x2="1" y2="0"><stop offset="0.0000" stop-color="#abefff"/><stop offset="0.0625" stop-color="#b5efff"/><stop offset="0.1250" stop-color="#beefff"/><stop offset="0.1875" stop-color="#c9efff"/><stop offset="0.2500" stop-color="#d3efff"/><stop offset="0.3125" stop-color="#ddefff"/><stop offset="0.3750" stop-color="#e8eeff"/><stop offset="0.4375" stop-color="#f3eeff"/><stop offset="0.5000" stop-color="#feeeff"/><stop offset="0.5625" stop-color="#ffe5f5"/><stop offset="0.6250" stop-color="#ffdbeb"/><stop offset="0.6875" stop-color="#ffd2e1"/><stop offset="0.7500" stop-color="#ffc9d8"/><stop offset="0.8125" stop-color="#ffc1d0"/><stop offset="0.8750" stop-color="#ffbac8"/><stop offset="0.9375" stop-color="#ffb3c0"/><stop offset="1.0000" stop-color="#ffacb9"/></linearGradient>
<linearGradient id="c32" x1="0" y1="0" x2="1" y2="0"><stop offset="0.0000" stop-color="#abedff"/><stop offset="0.0625" stop-color="#b5edff"/><stop offset="0.1250" stop-color="#bfedff"/><stop offset="0.1875" stop-color="#c9edff"/><stop offset="0.2500" stop-color="#d3ecff"/><stop offset="0.3125" stop-color="#ddecff"/><stop offset="0.3750" stop-color="#e8ecff"/><stop offset="0.4375" stop-color="#f3ecff"/><stop offset="0.5000" stop-color="#feecff"/><stop offset="0.5625" stop-color="#ffe2f5"/><stop offset="0.6250" stop-color="#ffd9eb"/><stop offset="0.6875" stop-color="#ffd0e1"/><stop offset="0.7500" stop-color="#ffc7d9"/><stop offset="0.8125" stop-color="#ffc0d0"/><stop offset="0.8750" stop-color="#ffb8c8"/><stop offset="0.9375" stop-color="#ffb1c1"/><stop offset="1.0000" stop-color="#ffaaba"/></linearGradient>
<linearGradient id="c33" x1="0" y1="0" x2="1" y2="0"><stop offset="0.0000" stop-color="#abebff"/><stop offset="0.0625" stop-color="#b5ebff"/><stop offset="0.1250" stop-color="#bfebff"/><stop offset="0.1875" stop-color="#c9eaff"/><stop offset="0.2500" stop-color="#d3eaff"/><stop offset="0.3125" stop-color="#ddeaff"/><stop offset="0.3750" stop-color="#e8eaff"/><stop offset="0.4375" stop-color="#f3eaff"/><stop offset="0.5000" stop-color="#fee9ff"/><stop offset="0.5625" stop-color="#ffe0f5"/><stop offset="0.6250" stop-color="#ffd7eb"/><stop offset="0.6875" stop-color="#ffcee2"/><stop offset="0.7500" stop-color="#ffc6d9"/><stop offset="0.8125" stop-color="#ffbed0"/><stop offset="0.8750" stop-color="#ffb6c8"/><stop offset="0.9375" stop-color="#ffafc1"/><stop offset="1.0000" stop-color="#ffa9ba"/></linearGradient>
<linearGradient id="c34" x1="0" y1="0" x2="1" y2="0"><stop offset="0.0000" stop-color="#abe9ff"/><stop offset="0.0625" stop-color="#b5e9ff"/><stop offset="0.1250" stop-color="#bfe8ff"/><stop offset="0.1875" stop-color="#c9e8ff"/><stop offset="0.2500" stop-color="#d3e8ff"/><stop offset="0.3125" stop-color="#dde8ff"/><stop offset="0.3750" stop-color="#e8e8ff"/><stop offset="0.4375" stop-color="#f3e7ff"/><stop offset="0.5000" stop-color="#fee7ff"/><stop offset="0.5625" stop-color="#ffdef6"/><stop offset="0.6250" stop-color="#ffd5eb"/><stop offset="0.6875" stop-color="#ffcce2"/><stop offset="0.7500" stop-color="#ffc4d9"/><stop offset="0.8125" stop-color="#ffbcd1"/><stop offset="0.8750" stop-color="#ffb5c9"/><stop offset="0.9375" stop-color="#ffaec1"/><stop offset="1.0000" stop-color="#ffa7ba"/></linearGradient>
<linearGradient id="c35" x1="0" y1="0" x2="1" y2="0"><stop offset="0.0000" stop-color="#abe7ff"/><stop offset="0.0625" stop-color="#b5e7ff"/><stop offset="0.1250" stop-color="#bfe6ff"/><stop offset="0.1875" stop-color="#c9e6ff"/><stop offset="0.2500" stop-color="#d3e6ff"/><stop offset="0.3125" stop-color="#dde6ff"/><stop offset="0.3750" stop-color="#e8e5ff"/><stop offset="0.4375" stop-color="#f3e5ff"/><stop offset="0.5000" stop-color="#fde5ff"/><stop offset="0.5625" stop-color="#ffdcf6"/><stop offset="0.6250" stop-color="#ffd3ec"/><stop offset="0.6875" stop-color="#ffcae2"/><stop offset="0.7500" stop-color="#ffc2d9"/><stop offset="0.8125" stop-color="#ffbad1"/><stop offset="0.8750" stop-color="#ffb3c9"/><stop offset="0.9375" stop-color="#ffacc2"/><stop offset="1.0000" stop-color="#ffa6bb"/></linearGradient>
<linearGradient id="c36" x1="0" y1="0" x2="1" y2="0"><stop offset="0.0000" stop-color="#abe5ff"/><stop offset="0.0625" stop-color="#b5e4ff"/><stop offset="0.1250" stop-color="#bfe4ff"/><stop offset="0.1875" stop-color="#c9e4ff"/><stop offset="0.2500" stop-color="#d3e4ff"/><stop offset="0.3125" stop-color="#dde3ff"/><stop offset="0.3750" stop-color="#e8e3ff"/><stop offset="0.4375" stop-color="#f2e3ff"/><stop offset="0.5000" stop-color="#fde3ff"/><stop offset="0.5625" stop-color="#ffdaf6"/><stop offset="0.6250" stop-color="#ffd1ec"/><stop offset="0.6875" stop-color="#ffc8e2"/><stop offset="0.7500" stop-color="#ffc0da"/><stop offset="0.8125" stop-color="#ffb9d1"/><stop offset="0.8750" stop-color="#ffb1c9"/><stop offset="0.9375" stop-color="#ffabc2"/><stop offset="1.0000" stop-color="#ffa4bb"/></linearGradient>
<linearGradient id="c37" x1="0" y1="0" x2="1" y2="0"><stop offset="0.0000" stop-color="#ace3ff"/><stop offset="0.0625" stop-color="#b5e2ff"/><stop offset="0.1250" stop-color="#bfe2ff"/><stop offset="0.1875" stop-color="#c9e2ff"/><stop offset="0.2500" stop-color="#d3e1ff"/><stop offset="0.3125" stop-color="#dde1ff"/><stop offset="0.3750" stop-color="#e8e1ff"/><stop offset="0.4375" stop-color="#f2e1ff"/><stop offset="0.5000" stop-color="#fde0ff"/><stop offset="0.5625" stop-color="#ffd8f6"/><stop offset="0.6250" stop-color="#ffcfec"/><stop offset="0.6875" stop-color="#ffc7e3"/><stop offset="0.7500" stop-color="#ffbfda"/><stop offset="0.8125" stop-color="#ffb7d1"/><stop offset="0.8750" stop-color="#ffb0ca"/><stop offset="0.9375" stop-color="#ffa9c2"/><stop offset="1.0000" stop-color="#ffa3bb"/></linearGradient>
<linearGradient id="c38" x1="0" y1="0" x2="1" y2="0"><stop offset="0.0000" stop-color="#ace0ff"/><stop offset="0.0625" stop-color="#b5e0ff"/><stop offset="0.1250" stop-color="#bfe0ff"/><stop offset="0.1875" stop-color="#c9e0ff"/><stop offset="0.2500" stop-color="#d3dfff"/><stop offset="0.3125" stop-color="#dddfff"/><stop offset="0.3750" stop-color="#e8dfff"/><stop offset="0.4375" stop-color="#f2deff"/><stop offset="0.5000" stop-color="#fddeff"/><stop offset="0.5625" stop-color="#ffd6f6"/><stop offset="0.6250" stop-color="#ffcdec"/><stop offset="0.6875" stop-color="#ffc5e3"/><stop offset="0.7500" stop-color="#ffbdda"/><stop offset="0.8125" stop-color="#ffb5d2"/><stop offset="0.8750" stop-color="#ffaeca"/><stop offset="0.9375" stop-color="#ffa8c2"/><stop offset="1.0000" stop-color="#ffa1bb"/></linearGradient>
<linearGradient id="c39" x1="0" y1="0" x2="1" y2="0"><stop offset="0.0000" stop-color="#acdeff"/><stop offset="0.0625" stop-color="#b5deff"/><stop offset="0.1250" stop-color="#bfdeff"/><stop offset="0.1875" stop-color="#c9ddff"/><stop offset="0.2500" stop-color="#d3ddff"/><stop offset="0.3125" stop-color="#ddddff"/><stop offset="0.3750" stop-color="#e7ddff"/><stop offset="0.4375" stop-color="#f2dcff"/><stop offset="0.5000" stop-color="#fddcff"/><stop offset="0.5625" stop-color="#ffd4f7"/><stop offset="0.6250" stop-color="#ffcbed"/><stop offset="0.6875" stop-color="#ffc3e3"/><stop offset="0.7500" stop-color="#ffbbda"/><stop offset="0.8125" stop-color="#ffb4d2"/><stop offset="0.8750" stop-color="#ffadca"/><stop offset="0.9375" stop-color="#ffa6c3"/><stop offset="1.0000" stop-color="#ffa0bc"/></linearGradient>
<linearGradient id="c40" x1="0" y1="0" x2="1" y2="0"><stop offset="0.0000" stop-color="#acdcff"/><stop offset="0.0625" stop-color="#b5dcff"/><stop offset="0.1250" stop-color="#bfdcff"/><stop offset="0.1875" stop-color="#c9dbff"/><stop offset="0.2500" stop-color="#d3dbff"/><stop offset="0.3125" stop-color="#dddbff"/><stop offset="0.3750" stop-color="#e7daff"/><stop offset="0.4375" stop-color="#f2daff"/><stop offset="0.5000" stop-color="#fddaff"/><stop offset="0.5625" stop-color="#ffd2f7"/><stop offset="0.6250" stop-color="#ffc9ed"/><stop offset="0.6875" stop-color="#ffc1e3"/><stop offset="0.7500" stop-color="#ffb9db"/><stop offset="0.8125" stop-color="#ffb2d2"/><stop offset="0.8750" stop-color="#ffabca"/><stop offset="0.9375" stop-color="#ffa4c3"/><stop offset="1.0000" stop-color="#ff9ebc"/></linearGradient>
<linearGradient id="c41" x1="0" y1="0" x2="1" y2="0"><stop offset="0.0000" stop-color="#acdaff"/><stop offset="0.0625" stop-color="#b6daff"/><stop offset="0.1250" stop-color="#bfdaff"/><stop offset="0.1875" stop-color="#c9d9ff"/><stop offset="0.2500" stop-color="#d3d9ff"/><stop offset="0.3125" stop-color="#ddd9ff"/><stop offset="0.3750" stop-color="#e7d8ff"/><stop offset="0.4375" stop-color="#f2d8ff"/><stop offset="0.5000" stop-color="#fcd7ff"/><stop offset="0.5625" stop-color="#ffd0f7"/><stop offset="0.6250" stop-color="#ffc8ed"/><stop offset="0.6875" stop-color="#ffbfe4"/><stop offset="0.7500" stop-color="#ffb8db"/><stop offset="0.8125" stop-color="#ffb0d3"/><stop offset="0.8750" stop-color="#ffa9cb"/><stop offset="0.9375" stop-color="#ffa3c3"/><stop offset="1.0000" stop-color="#ff9dbc"/></linearGradient>
<linearGradient id="c42" x1="0" y1="0" x2="1" y2="0"><stop offset="0.0000" stop-color="#acd8ff"/><stop offset="0.0625" stop-color="#b6d8ff"/><stop offset="0.1250" stop-color="#bfd8ff"/><stop offset="0.1875" stop-color="#c9d7ff"/><stop offset="0.2500" stop-color="#d3d7ff"/><stop offset="0.3125" stop-color="#ddd6ff"/><stop offset="0.3750" stop-color="#e7d6ff"/><stop offset="0.4375" stop-color="#f2d6ff"/><stop offset="0.5000" stop-color="#fcd5ff"/><stop offset="0.5625" stop-color="#ffcef7"/><stop offset="0.6250" stop-color="#ffc6ed"/><stop offset="0.6875" stop-color="#ffbee4"/><stop offset="0.7500" stop-color="#ffb6db"/><stop offset="0.8125" stop-color="#ffafd3"/><stop offset="0.8750" stop-color="#ffa8cb"/><stop offset="0.9375" stop-color="#ffa1c4"/><stop offset="1.0000" stop-color="#ff9bbd"/></linearGradient>
<linearGradient id="c43" x1="0" y1="0" x2="1" y2="0"><stop offset="0.0000" stop-color="#acd6ff"/><stop offset="0.0625" stop-color="#b6d6ff"/><stop offset="0.1250" stop-color="#bfd5ff"/><stop offset="0.1875" stop-color="#c9d5ff"/><stop offset="0.2500" stop-color="#d3d5ff"/><stop offset="0.3125" stop-color="#ddd4ff"/><stop offset="0.3750" stop-color="#e7d4ff"/><stop offset="0.4375" stop-color="#f2d4ff"/><stop offset="0.5000" stop-color="#fcd3ff"/><stop offset="0.5625" stop-color="#ffccf7"/><stop offset="0.6250" stop-color="#ffc4ed"/><stop offset="0.6875" stop-color="#ffbce4"/><stop offset="0.7500" stop-color="#ffb4db"/><stop offset="0.8125" stop-color="#ffadd3"/><stop offset="0.8750" stop-color="#ffa6cb"/><stop offset="0.9375" stop-color="#ffa0c4"/><stop offset="1.0000" stop-color="#ff9abd"/></linearGradient>
<linearGradient id="c44" x1="0" y1="0" x2="1" y2="0"><stop offset="0.0000" stop-color="#acd4ff"/><stop offset="0.0625" stop-color="#b6d4ff"/><stop offset="0.1250" stop-color="#bfd3ff"/><stop offset="0.1875" stop-color="#c9d3ff"/><stop offset="0.2500" stop-color="#d3d3ff"/><stop offset="0.3125" stop-color="#ddd2ff"/><stop offset="0.3750" stop-color="#e7d2ff"/><stop offset="0.4375" stop-color="#f1d1ff"/><stop offset="0.5000" stop-color="#fcd1ff"/><stop offset="0.5625" stop-color="#ffcaf7"/><stop offset="0.6250" stop-color="#ffc2ee"/><stop offset="0.6875" stop-color="#ffbae4"/><stop offset="0.7500" stop-color="#ffb2dc"/><stop offset="0.8125" stop-color="#ffabd3"/><stop offset="0.8750" stop-color="#ffa5cc"/><stop offset="0.9375" stop-color="#ff9ec4"/><stop offset="1.0000" stop-color="#ff98bd"/></linearGradient>
<linearGradient id="c45" x1="0" y1="0" x2="1" y2="0"><stop offset="0.0000" stop-color="#add2ff"/><stop offset="0.0625" stop-color="#b6d2ff"/><stop offset="0.1250" stop-color="#bfd1ff"/><stop offset="0.1875" stop-color="#c9d1ff"/><stop offset="0.2500" stop-color="#d3d1ff"/><stop offset="0.3125" stop-color="#ddd0ff"/><stop offset="0.3750" stop-color="#e7d0ff"/><stop offset="0.4375" stop-color="#f1cfff"/><stop offset="0.5000" stop-color="#fccfff"/><stop offset="0.5625" stop-color="#ffc9f8"/><stop offset="0.6250" stop-color="#ffc0ee"/><stop offset="0.6875" stop-color="#ffb8e5"/><stop offset="0.7500" stop-color="#ffb1dc"/><stop offset="0.8125" stop-color="#ffaad4"/><stop offset="0.8750" stop-color="#ffa3cc"/><stop offset="0.9375" stop-color="#ff9dc4"/><stop offset="1.0000" stop-color="#ff97bd"/></linearGradient>
<linearGradient id="c46" x1="0" y1="0" x2="1" y2="0"><stop offset="0.0000" stop-color="#add0ff"/><stop offset="0.0625" stop-color="#b6d0ff"/><stop offset="0.1250" stop-color="#bfcfff"/><stop offset="0.1875" stop-color="#c9cfff"/><stop offset="0.2500" stop-color="#d3cfff"/><stop offset="0.3125" stop-color="#ddceff"/><stop offset="0.3750" stop-color="#e7ceff"/><stop offset="0.4375" stop-color="#f1cdff"/><stop offset="0.5000" stop-color="#fccdff"/><stop offset="0.5625" stop-color="#ffc7f8"/><stop offset="0.6250" stop-color="#ffbeee"/><stop offset="0.6875" stop-color="#ffb6e5"/><stop offset="0.7500" stop-color="#ffafdc"/><stop offset="0.8125" stop-color="#ffa8d4"/><stop offset="0.8750" stop-color="#ffa2cc"/><stop offset="0.9375" stop-color="#ff9bc5"/><stop offset="1.0000" stop-color="#ff95be"/></linearGradient>
<linearGradient id="c47" x1="0" y1="0" x2="1" y2="0"><stop offset="0.0000" stop-color="#adceff"/><stop offset="0.0625" stop-color="#b6ceff"/><stop offset="0.1250" stop-color="#c0cdff"/><stop offset="0.1875" stop-color="#c9cdff"/><stop offset="0.2500" stop-color="#d3cdff"/><stop offset="0.3125" stop-color="#ddccff"/><stop offset="0.3750" stop-color="#e7ccff"/><stop offset="0.4375" stop-color="#f1cbff"/><stop offset="0.5000" stop-color="#fccbff"/><stop offset="0.5625" stop-color="#ffc5f8"/><stop offset="0.6250" stop-color="#ffbcee"/><stop offset="0.6875" stop-color="#ffb5e5"/><stop offset="0.7500" stop-color="#ffaddc"/><stop offset="0.8125" stop-color="#ffa7d4"/><stop offset="0.8750" stop-color="#ffa0cc"/><stop offset="0.9375" stop-color="#ff9ac5"/><stop offset="1.0000" stop-color="#ff94be"/></linearGradient>
<linearGradient id="gRowH" x1="0" y1="0" x2="0" y2="1"><stop offset="0" stop-color="#2e2e2e"/><stop offset="1" stop-color="#202020"/></linearGradient>
<linearGradient id="gHdr" x1="0" y1="0" x2="0" y2="1"><stop offset="0" stop-color="#2c2c2c"/><stop offset="0.5" stop-color="#2a2a2a"/><stop offset="0.52" stop-color="#1c1c1c"/><stop offset="0.9" stop-color="#141414"/><stop offset="1" stop-color="#0a0a0a"/></linearGradient>
<linearGradient id="gBot" x1="0" y1="0" x2="0" y2="1"><stop offset="0" stop-color="#4a4a4a"/><stop offset="0.25" stop-color="#3e3e3e"/><stop offset="0.6" stop-color="#2e2e2e"/><stop offset="1" stop-color="#1e1e1e"/></linearGradient>
<linearGradient id="gAct" x1="0" y1="0" x2="0" y2="1"><stop offset="0" stop-color="#1c1c1c"/><stop offset="0.1" stop-color="#242424"/><stop offset="1" stop-color="#343434"/></linearGradient>
<linearGradient id="gSw" x1="0" y1="0" x2="0" y2="1"><stop offset="0" stop-color="#848484"/><stop offset="0.7" stop-color="#6e6e6e"/><stop offset="1" stop-color="#5e5e5e"/></linearGradient>
<linearGradient id="gNav" x1="0" y1="0" x2="0" y2="1"><stop offset="0" stop-color="#9c9c9c"/><stop offset="0.5" stop-color="#7c7c7c"/><stop offset="1" stop-color="#6c6c6c"/></linearGradient>
</defs>
<g id="titlebar">
<rect x="0" y="0" width="1920" height="17.3" fill="#00b7c3"/>
<circle cx="7.7" cy="8.3" r="5.3" fill="#0c0c0c" stroke="url(#icoRing)" stroke-width="0.9"/>
<text x="4.00" y="10.20" font-size="5.20" fill="#ffffff" font-weight="bold" textLength="7.52" lengthAdjust="spacingAndGlyphs">CM</text>
<text x="17.26" y="11.70" font-size="10.00" fill="#000000" textLength="252.61" lengthAdjust="spacingAndGlyphs" stroke="#000000" stroke-width="0.25">CalMAN 2019 CalMAN Ultimate for Business 82 Days Remaining</text>
<path d="M1829 7.9h8" stroke="#0c2c30" stroke-width="1.3" fill="none"/>
<path d="M1863.6 6h5.4v5h-5.4z M1865.4 6v-1.8h5.4v5h-1.8" stroke="#0c2c30" stroke-width="1.2" fill="none" stroke-linejoin="round"/>
<path d="M1897.3 3.8l7.6 7.4M1904.9 3.8l-7.6 7.4" stroke="#0c2c30" stroke-width="1.1" fill="none"/>
</g>
<g id="toolbar">
<rect x="0" y="17.3" width="1920" height="49" fill="#222222"/>
<path d="M0.6 17.3H137.2V35.6q0 3.6-3.6 3.6H3.6q-3 0-3-3.6z" fill="url(#gRed)" stroke="#7a2a2a" stroke-width="0.8"/>
<path d="M1.2 38.4H134q2.6 0 2.6-3V18" stroke="#e89090" stroke-width="0.7" fill="none" opacity="0.55"/>
<text x="8.94" y="35.90" font-size="23.70" fill="#ffffff" font-weight="bold" textLength="99.41" lengthAdjust="spacingAndGlyphs">CalMAN</text>
<circle cx="124.2" cy="28.6" r="7.4" fill="url(#gRedBtn)"/>
<path d="M120.5 27.2h7.4l-3.7 4.1z" fill="#ffffff"/>
<rect x="142.2" y="26.5" width="1777.8" height="4.2" fill="url(#gRainbow)"/>
<g stroke="#0f9a0f" stroke-width="1.4" fill="none">
<path d="M1863.8 32.9H1860.3V42.5H1863.8V37.7H1862.05M1868.4199999999998 37.7H1870.72M1878.84 32.9H1875.34V37.7H1878.84V42.5H1875.34M1882.86 32.9V37.7H1886.36V32.9M1884.61 37.7V42.5M1890.3799999999999 42.5V32.9L1893.8799999999999 42.5V32.9M1901.3999999999999 32.9H1897.8999999999999V42.5H1901.3999999999999"/>
</g>
</g>
<g id="sidebar">
<path d="M0 43.2H145.5q4.5 0 4.5 4.5V1058H0z" fill="#555555"/>
<circle cx="14" cy="54.6" r="7" fill="#4e4e4e"/>
<circle cx="14" cy="54.6" r="6.2" fill="url(#gKnob)"/>
<circle cx="13.6" cy="53.6" r="2.7" fill="url(#gDot)"/>
<circle cx="135.4" cy="54.4" r="7.2" fill="#646464"/>
<circle cx="135.4" cy="54.8" r="6.4" fill="#5e5e5e"/>
<path d="M137.6 49.6v8l-4.6-4z" fill="#ffffff"/>
<text x="6.39" y="76.10" font-size="10.20" fill="#f2f2f2" textLength="48.08" lengthAdjust="spacingAndGlyphs">SDR Toolkit</text>
<rect x="7" y="79" width="136" height="187.6" fill="#232323"/>
<rect x="30.9" y="152.7" width="62.2" height="10.1" fill="#e6e6e6"/>
<text x="21.49" y="92.70" font-size="8.90" fill="#f4f4f4" font-weight="bold" textLength="35.28" lengthAdjust="spacingAndGlyphs">Welcome</text>
<text x="31.86" y="104.80" font-size="8.90" fill="#f4f4f4" textLength="34.00" lengthAdjust="spacingAndGlyphs">Welcome</text>
<text x="31.50" y="115.60" font-size="8.90" fill="#f4f4f4" textLength="29.11" lengthAdjust="spacingAndGlyphs">Options</text>
<text x="21.31" y="127.00" font-size="8.90" fill="#f4f4f4" font-weight="bold" textLength="31.50" lengthAdjust="spacingAndGlyphs">Analysis</text>
<text x="31.24" y="138.80" font-size="8.90" fill="#f4f4f4" textLength="56.91" lengthAdjust="spacingAndGlyphs">Dynamic Range</text>
<text x="31.50" y="149.40" font-size="8.90" fill="#f4f4f4" textLength="53.86" lengthAdjust="spacingAndGlyphs">Grayscale - 2pt</text>
<text x="31.49" y="160.40" font-size="8.90" fill="#303030" textLength="61.36" lengthAdjust="spacingAndGlyphs">Grayscale - Multi</text>
<text x="31.48" y="171.70" font-size="8.90" fill="#f4f4f4" textLength="46.38" lengthAdjust="spacingAndGlyphs">Color Gamut</text>
<text x="31.62" y="182.30" font-size="8.90" fill="#f4f4f4" textLength="25.35" lengthAdjust="spacingAndGlyphs">3D LUT</text>
<text x="31.50" y="193.50" font-size="8.90" fill="#f4f4f4" textLength="48.53" lengthAdjust="spacingAndGlyphs">ColorChecker</text>
<text x="31.53" y="204.60" font-size="8.90" fill="#f4f4f4" textLength="67.66" lengthAdjust="spacingAndGlyphs">Saturation Sweeps</text>
<text x="31.24" y="215.50" font-size="8.90" fill="#f4f4f4" textLength="69.95" lengthAdjust="spacingAndGlyphs">Luminance Sweeps</text>
<text x="31.52" y="226.60" font-size="8.90" fill="#f4f4f4" textLength="66.19" lengthAdjust="spacingAndGlyphs">Screen Uniformity</text>
<text x="31.53" y="237.70" font-size="8.90" fill="#f4f4f4" textLength="64.19" lengthAdjust="spacingAndGlyphs">Screen Angularity</text>
<text x="31.53" y="248.40" font-size="8.90" fill="#f4f4f4" textLength="56.18" lengthAdjust="spacingAndGlyphs">Screen Stability</text>
<text x="31.53" y="259.50" font-size="8.90" fill="#f4f4f4" textLength="73.51" lengthAdjust="spacingAndGlyphs">Spectral Power Dist.</text>
<path d="M16.6 88.2v3.2h-3.2z" fill="#6a6a6a"/>
<path d="M16.6 122.4v3.2h-3.2z" fill="#6a6a6a"/>
</g>
<g id="tabs">
<path d="M151 66.2V47q0-3.6 3.6-3.6H215q3.8 0 3.8 3.6V66.2z" fill="url(#gTab)" stroke="#5c5c5c" stroke-width="0.9"/>
<path d="M193.6 43.6V66" stroke="#5c5c5c" stroke-width="1"/>
<path d="M192.7 44V66" stroke="#2c2c2c" stroke-width="0.8"/>
<text x="154.05" y="59.20" font-size="9.30" fill="#eeeeee" textLength="36.20" lengthAdjust="spacingAndGlyphs">History 1</text>
<circle cx="205.6" cy="56.4" r="6.6" fill="#333333"/>
<path d="M203 56.6h5.2M205.6 54v5.2" stroke="#777777" stroke-width="0.9"/>
</g>
<g id="devices">
<path d="M1551 66V46.6q0-3 3-3H1655.4q3 0 3 3V66z" fill="url(#gPanel)"/>
<path d="M1551 66V47.2q0-2.6 2.6-2.8h1V66z" fill="#18d818"/>
<text x="1557.22" y="52.70" font-size="8.80" fill="#f4f4f4" textLength="49.98" lengthAdjust="spacingAndGlyphs">X-Rite i1Pro 2</text>
<text x="1556.71" y="63.00" font-size="8.80" fill="#f4f4f4" textLength="42.27" lengthAdjust="spacingAndGlyphs">Direct View</text>
<circle cx="1616.8" cy="55.2" r="7.2" fill="url(#gDrop)"/>
<path d="M1613.3999999999999 54.300000000000004h6.8l-3.4 3.8z" fill="#f4f4f4"/>
<path d="M1631.4 45.5V66" stroke="#3e3e3e" stroke-width="1"/><path d="M1632.3 45.5V66" stroke="#6a6a6a" stroke-width="0.8"/>
<circle cx="1646.6" cy="54.7" r="9.6" fill="#0000f0" stroke="#d8d8ff" stroke-width="1.1"/>
<text x="1640.55" y="57.40" font-size="7.60" fill="#ffffff" font-weight="bold" textLength="12.07" lengthAdjust="spacingAndGlyphs">238</text>
<path d="M1662.8 66V46.6q0-3 3-3H1757.4q3 0 3 3V66z" fill="url(#gPanel)"/>
<path d="M1662.8 66V47.2q0-2.6 2.6-2.8h1V66z" fill="#f0e616"/>
<text x="1668.83" y="52.70" font-size="8.80" fill="#f4f4f4" textLength="25.73" lengthAdjust="spacingAndGlyphs">Source</text>
<circle cx="1748" cy="55.2" r="7.2" fill="url(#gDrop)"/>
<path d="M1744.6 54.300000000000004h6.8l-3.4 3.8z" fill="#f4f4f4"/>
<path d="M1764.8 66V46.6q0-3 3-3H1869.2q3 0 3 3V66z" fill="url(#gPanel)"/>
<path d="M1764.8 66V47.2q0-2.6 2.6-2.8h1V66z" fill="#f0e616"/>
<text x="1770.72" y="52.70" font-size="8.80" fill="#f4f4f4" textLength="80.44" lengthAdjust="spacingAndGlyphs">Direct Display Control</text>
<circle cx="1859.8" cy="55.2" r="7.2" fill="url(#gDrop)"/>
<path d="M1856.3999999999999 54.300000000000004h6.8l-3.4 3.8z" fill="#f4f4f4"/>
<rect x="1874.4" y="43.8" width="25" height="21" rx="3" fill="url(#gBtnL)" stroke="#9a9a9a" stroke-width="0.8"/>
<rect x="1900.4" y="43.8" width="25" height="21" rx="3" fill="url(#gBtnL)" stroke="#9a9a9a" stroke-width="0.8"/>
<circle cx="1887" cy="54.3" r="6.8" fill="#565656"/>
<path d="M1890.60 54.30L1892.60 54.30M1889.55 56.85L1890.96 58.26M1887.00 57.90L1887.00 59.90M1884.45 56.85L1883.04 58.26M1883.40 54.30L1881.40 54.30M1884.45 51.75L1883.04 50.34M1887.00 50.70L1887.00 48.70M1889.55 51.75L1890.96 50.34" stroke="#f0f0f0" stroke-width="1.7"/>
<circle cx="1887" cy="54.3" r="3.3" fill="none" stroke="#f0f0f0" stroke-width="1.4"/>
<circle cx="1913.6" cy="54.3" r="6.8" fill="#565656"/>
<path d="M1915.6 50.2v8.2l-4.8-4.1z" fill="#f4f4f4"/>
</g>
<g id="main">
<rect x="150" y="66.2" width="1770" height="945" fill="#333333"/>
<rect x="149.9" y="66.2" width="1.2" height="945" fill="#292929"/>
<text x="157.45" y="124.00" font-size="48.26" fill="#f2f2f2" textLength="183.15" lengthAdjust="spacingAndGlyphs">Grayscale</text>
<text transform="translate(350.98 124.00) scale(1.0355 1)" font-size="48.26" fill="#f2f2f2">-</text>
<text x="375.51" y="124.00" font-size="48.26" fill="#f2f2f2" textLength="105.36" lengthAdjust="spacingAndGlyphs">Multi</text>
<text x="266.80" y="178.00" font-size="21.80" fill="#f2f2f2" textLength="23.43" lengthAdjust="spacingAndGlyphs">dE</text>
<text x="295.99" y="178.00" font-size="21.80" fill="#f2f2f2" textLength="86.81" lengthAdjust="spacingAndGlyphs">Formula:</text>
<rect x="390" y="154.8" width="156.4" height="28.4" fill="url(#gCombo)" stroke="#707070" stroke-width="1"/>
<text x="394.34" y="178.80" font-size="19.77" fill="#f4f4f4" textLength="38.13" lengthAdjust="spacingAndGlyphs">2000</text>
<path d="M530.6 167.2h10.6l-5.3 6.4z" fill="#0a0a0a"/>
<rect x="203.8" y="221.4" width="322.80" height="265.00" fill="#232323"/><path d="M205.60000000000002 486.2V223.3H526.2" fill="none" stroke="#171717" stroke-width="1.1"/>
<path d="M246.66 221.4V486.4" stroke="#868686" stroke-width="2"/>
<path d="M289.51 221.4V486.4" stroke="#868686" stroke-width="2"/>
<path d="M332.37 221.4V486.4" stroke="#868686" stroke-width="2"/>
<path d="M375.23 221.4V486.4" stroke="#868686" stroke-width="2"/>
<path d="M418.09 221.4V486.4" stroke="#868686" stroke-width="2"/>
<path d="M460.94 221.4V486.4" stroke="#868686" stroke-width="2"/>
<path d="M503.80 221.4V486.4" stroke="#868686" stroke-width="2"/>
<path d="M203.20000000000002 488.09999999999997H528.2V221.0" fill="none" stroke="#202020" stroke-width="1.1"/><rect x="203.8" y="221.4" width="322.80" height="265.00" fill="none" stroke="#949494" stroke-width="2.0"/>
<text x="306.23" y="215.40" font-size="17.01" fill="#dcdcdc" textLength="85.48" lengthAdjust="spacingAndGlyphs">DeltaE 2000</text>
<rect x="204.00" y="225.00" width="66.57" height="16.5" fill="url(#gB100)" stroke="#050505" stroke-width="1.8"/>
<text x="170.64" y="241.05" font-size="17.01" fill="#e4e4e4" textLength="27.10" lengthAdjust="spacingAndGlyphs">100</text>
<rect x="204.00" y="249.09" width="70.24" height="16.5" fill="url(#gB90)" stroke="#050505" stroke-width="1.8"/>
<text x="179.67" y="265.14" font-size="17.01" fill="#e4e4e4" textLength="18.06" lengthAdjust="spacingAndGlyphs">90</text>
<rect x="204.00" y="273.18" width="64.30" height="16.5" fill="url(#gB80)" stroke="#050505" stroke-width="1.8"/>
<text x="179.67" y="289.23" font-size="17.01" fill="#e4e4e4" textLength="18.06" lengthAdjust="spacingAndGlyphs">80</text>
<rect x="204.00" y="297.27" width="58.11" height="16.5" fill="url(#gB70)" stroke="#050505" stroke-width="1.8"/>
<text x="179.67" y="313.32" font-size="17.01" fill="#e4e4e4" textLength="18.06" lengthAdjust="spacingAndGlyphs">70</text>
<rect x="204.00" y="321.36" width="51.40" height="16.5" fill="url(#gB60)" stroke="#050505" stroke-width="1.8"/>
<text x="179.67" y="337.41" font-size="17.01" fill="#e4e4e4" textLength="18.06" lengthAdjust="spacingAndGlyphs">60</text>
<rect x="204.00" y="345.45" width="50.83" height="16.5" fill="url(#gB50)" stroke="#050505" stroke-width="1.8"/>
<text x="179.67" y="361.50" font-size="17.01" fill="#e4e4e4" textLength="18.06" lengthAdjust="spacingAndGlyphs">50</text>
<rect x="204.00" y="369.54" width="40.59" height="16.5" fill="url(#gB40)" stroke="#050505" stroke-width="1.8"/>
<text x="179.67" y="385.59" font-size="17.01" fill="#e4e4e4" textLength="18.06" lengthAdjust="spacingAndGlyphs">40</text>
<rect x="204.00" y="393.63" width="32.63" height="16.5" fill="url(#gB30)" stroke="#050505" stroke-width="1.8"/>
<text x="179.67" y="409.68" font-size="17.01" fill="#e4e4e4" textLength="18.06" lengthAdjust="spacingAndGlyphs">30</text>
<rect x="204.00" y="417.72" width="24.84" height="16.5" fill="url(#gB20)" stroke="#050505" stroke-width="1.8"/>
<text x="179.67" y="433.77" font-size="17.01" fill="#e4e4e4" textLength="18.06" lengthAdjust="spacingAndGlyphs">20</text>
<rect x="204.00" y="441.81" width="20.12" height="16.5" fill="url(#gB10)" stroke="#050505" stroke-width="1.8"/>
<text x="179.67" y="457.86" font-size="17.01" fill="#e4e4e4" textLength="18.06" lengthAdjust="spacingAndGlyphs">10</text>
<rect x="204.00" y="465.90" width="16.89" height="16.5" fill="url(#gB0)" stroke="#050505" stroke-width="1.8"/>
<text transform="translate(188.70 481.95) scale(0.9550 1)" font-size="17.01" fill="#e4e4e4">0</text>
<path d="M203.8 221.4V486.4" stroke="#949494" stroke-width="2.1"/>
<path d="M197.4 221.40H203.0" stroke="#e4e4e4" stroke-width="1.7"/>
<path d="M197.4 245.49H203.0" stroke="#e4e4e4" stroke-width="1.7"/>
<path d="M197.4 269.58H203.0" stroke="#e4e4e4" stroke-width="1.7"/>
<path d="M197.4 293.67H203.0" stroke="#e4e4e4" stroke-width="1.7"/>
<path d="M197.4 317.76H203.0" stroke="#e4e4e4" stroke-width="1.7"/>
<path d="M197.4 341.85H203.0" stroke="#e4e4e4" stroke-width="1.7"/>
<path d="M197.4 365.95H203.0" stroke="#e4e4e4" stroke-width="1.7"/>
<path d="M197.4 390.04H203.0" stroke="#e4e4e4" stroke-width="1.7"/>
<path d="M197.4 414.13H203.0" stroke="#e4e4e4" stroke-width="1.7"/>
<path d="M197.4 438.22H203.0" stroke="#e4e4e4" stroke-width="1.7"/>
<path d="M197.4 462.31H203.0" stroke="#e4e4e4" stroke-width="1.7"/>
<path d="M197.4 486.40H203.0" stroke="#e4e4e4" stroke-width="1.7"/>
<path d="M203.80 486.4v6.4" stroke="#e4e4e4" stroke-width="1.7"/>
<text transform="translate(199.28 512.20) scale(0.9550 1)" font-size="17.01" fill="#e4e4e4">0</text>
<path d="M246.66 486.4v6.4" stroke="#e4e4e4" stroke-width="1.7"/>
<text transform="translate(242.14 512.20) scale(0.9550 1)" font-size="17.01" fill="#e4e4e4">2</text>
<path d="M289.51 486.4v6.4" stroke="#e4e4e4" stroke-width="1.7"/>
<text transform="translate(285.05 512.20) scale(0.9550 1)" font-size="17.01" fill="#e4e4e4">4</text>
<path d="M332.37 486.4v6.4" stroke="#e4e4e4" stroke-width="1.7"/>
<text transform="translate(327.80 512.20) scale(0.9550 1)" font-size="17.01" fill="#e4e4e4">6</text>
<path d="M375.23 486.4v6.4" stroke="#e4e4e4" stroke-width="1.7"/>
<text transform="translate(370.71 512.20) scale(0.9550 1)" font-size="17.01" fill="#e4e4e4">8</text>
<path d="M418.09 486.4v6.4" stroke="#e4e4e4" stroke-width="1.7"/>
<text x="408.75" y="512.20" font-size="17.01" fill="#e4e4e4" textLength="18.06" lengthAdjust="spacingAndGlyphs">10</text>
<path d="M460.94 486.4v6.4" stroke="#e4e4e4" stroke-width="1.7"/>
<text x="451.70" y="512.20" font-size="17.01" fill="#e4e4e4" textLength="18.06" lengthAdjust="spacingAndGlyphs">12</text>
<path d="M503.80 486.4v6.4" stroke="#e4e4e4" stroke-width="1.7"/>
<text x="494.39" y="512.20" font-size="17.01" fill="#e4e4e4" textLength="18.06" lengthAdjust="spacingAndGlyphs">14</text>
<rect x="597.0" y="120.4" width="607.90" height="366.85" fill="#232323"/><path d="M598.8 487.05V122.30000000000001H1204.5" fill="none" stroke="#171717" stroke-width="1.1"/>
<path d="M597.0 442.00H1204.9" stroke="#868686" stroke-width="2"/>
<path d="M597.0 396.20H1204.9" stroke="#868686" stroke-width="2"/>
<path d="M597.0 350.00H1204.9" stroke="#868686" stroke-width="2"/>
<path d="M597.0 304.70H1204.9" stroke="#868686" stroke-width="2"/>
<path d="M597.0 257.30H1204.9" stroke="#868686" stroke-width="2"/>
<path d="M597.0 211.80H1204.9" stroke="#868686" stroke-width="2"/>
<path d="M597.0 166.30H1204.9" stroke="#868686" stroke-width="2"/>
<path d="M596.4 488.95H1206.5V120.0" fill="none" stroke="#202020" stroke-width="1.1"/><rect x="597.0" y="120.4" width="607.90" height="366.85" fill="none" stroke="#949494" stroke-width="2.0"/>
<text x="841.59" y="113.30" font-size="17.01" fill="#dcdcdc" textLength="89.47" lengthAdjust="spacingAndGlyphs">RGB Balance</text>
<path d="M591 487.25H597.0" stroke="#e4e4e4" stroke-width="1.7"/>
<text x="567.76" y="494.15" font-size="17.01" fill="#e4e4e4" textLength="23.47" lengthAdjust="spacingAndGlyphs">-40</text>
<path d="M591 442.00H597.0" stroke="#e4e4e4" stroke-width="1.7"/>
<text x="567.76" y="448.90" font-size="17.01" fill="#e4e4e4" textLength="23.47" lengthAdjust="spacingAndGlyphs">-30</text>
<path d="M591 396.20H597.0" stroke="#e4e4e4" stroke-width="1.7"/>
<text x="567.76" y="403.10" font-size="17.01" fill="#e4e4e4" textLength="23.47" lengthAdjust="spacingAndGlyphs">-20</text>
<path d="M591 350.00H597.0" stroke="#e4e4e4" stroke-width="1.7"/>
<text x="567.76" y="356.90" font-size="17.01" fill="#e4e4e4" textLength="23.47" lengthAdjust="spacingAndGlyphs">-10</text>
<path d="M591 304.70H597.0" stroke="#e4e4e4" stroke-width="1.7"/>
<text transform="translate(582.20 311.60) scale(0.9550 1)" font-size="17.01" fill="#e4e4e4">0</text>
<path d="M591 257.30H597.0" stroke="#e4e4e4" stroke-width="1.7"/>
<text x="573.17" y="264.20" font-size="17.01" fill="#e4e4e4" textLength="18.06" lengthAdjust="spacingAndGlyphs">10</text>
<path d="M591 211.80H597.0" stroke="#e4e4e4" stroke-width="1.7"/>
<text x="573.17" y="218.70" font-size="17.01" fill="#e4e4e4" textLength="18.06" lengthAdjust="spacingAndGlyphs">20</text>
<path d="M591 166.30H597.0" stroke="#e4e4e4" stroke-width="1.7"/>
<text x="573.17" y="173.20" font-size="17.01" fill="#e4e4e4" textLength="18.06" lengthAdjust="spacingAndGlyphs">30</text>
<path d="M591 120.40H597.0" stroke="#e4e4e4" stroke-width="1.7"/>
<text x="573.17" y="127.30" font-size="17.01" fill="#e4e4e4" textLength="18.06" lengthAdjust="spacingAndGlyphs">40</text>
<path d="M597.00 487.25v6.6" stroke="#e4e4e4" stroke-width="1.7"/>
<text transform="translate(592.48 512.20) scale(0.9550 1)" font-size="17.01" fill="#e4e4e4">0</text>
<path d="M657.79 487.25v6.6" stroke="#e4e4e4" stroke-width="1.7"/>
<text x="648.46" y="512.20" font-size="17.01" fill="#e4e4e4" textLength="18.06" lengthAdjust="spacingAndGlyphs">10</text>
<path d="M718.58 487.25v6.6" stroke="#e4e4e4" stroke-width="1.7"/>
<text x="709.46" y="512.20" font-size="17.01" fill="#e4e4e4" textLength="18.06" lengthAdjust="spacingAndGlyphs">20</text>
<path d="M779.37 487.25v6.6" stroke="#e4e4e4" stroke-width="1.7"/>
<text x="770.35" y="512.20" font-size="17.01" fill="#e4e4e4" textLength="18.06" lengthAdjust="spacingAndGlyphs">30</text>
<path d="M840.16 487.25v6.6" stroke="#e4e4e4" stroke-width="1.7"/>
<text x="831.26" y="512.20" font-size="17.01" fill="#e4e4e4" textLength="18.06" lengthAdjust="spacingAndGlyphs">40</text>
<path d="M900.95 487.25v6.6" stroke="#e4e4e4" stroke-width="1.7"/>
<text x="891.91" y="512.20" font-size="17.01" fill="#e4e4e4" textLength="18.06" lengthAdjust="spacingAndGlyphs">50</text>
<path d="M961.74 487.25v6.6" stroke="#e4e4e4" stroke-width="1.7"/>
<text x="952.61" y="512.20" font-size="17.01" fill="#e4e4e4" textLength="18.06" lengthAdjust="spacingAndGlyphs">60</text>
<path d="M1022.53 487.25v6.6" stroke="#e4e4e4" stroke-width="1.7"/>
<text x="1013.40" y="512.20" font-size="17.01" fill="#e4e4e4" textLength="18.06" lengthAdjust="spacingAndGlyphs">70</text>
<path d="M1083.32 487.25v6.6" stroke="#e4e4e4" stroke-width="1.7"/>
<text x="1074.25" y="512.20" font-size="17.01" fill="#e4e4e4" textLength="18.06" lengthAdjust="spacingAndGlyphs">80</text>
<path d="M1144.11 487.25v6.6" stroke="#e4e4e4" stroke-width="1.7"/>
<text x="1135.01" y="512.20" font-size="17.01" fill="#e4e4e4" textLength="18.06" lengthAdjust="spacingAndGlyphs">90</text>
<path d="M1204.90 487.25v6.6" stroke="#e4e4e4" stroke-width="1.7"/>
<text x="1191.05" y="512.20" font-size="17.01" fill="#e4e4e4" textLength="27.10" lengthAdjust="spacingAndGlyphs">100</text>
<clipPath id="cpR"><rect x="597.8" y="120.4" width="606.30" height="366.85"/></clipPath>
<g clip-path="url(#cpR)">
<polyline points="597.0,295.8 657.8,305.0 718.6,312.5 779.4,318.0 840.2,323.8 901.0,328.0 961.7,327.8 1022.5,329.5 1083.3,328.8 1144.1,327.8 1204.9,327.3" fill="none" stroke="#ff0000" stroke-width="3.3" stroke-linejoin="round"/>
<polyline points="597.0,293.3 657.8,298.3 718.6,304.2 779.4,308.3 840.2,313.8 901.0,313.8 961.7,313.3 1022.5,312.8 1083.3,310.0 1144.1,305.8 1204.9,298.0" fill="none" stroke="#008000" stroke-width="3.3" stroke-linejoin="round"/>
<polyline points="597.0,286.7 657.8,290.8 718.6,295.0 779.4,296.3 840.2,298.7 901.0,294.7 961.7,293.3 1022.5,289.2 1083.3,283.3 1144.1,276.3 1204.9,277.0" fill="none" stroke="#0000ff" stroke-width="3.3" stroke-linejoin="round"/>
</g>
<rect x="1260.0" y="120.4" width="147.40" height="373.20" fill="#232323"/><path d="M1261.8 493.40000000000003V122.30000000000001H1407.0" fill="none" stroke="#171717" stroke-width="1.1"/>
<path d="M1260.0 432.00H1407.4" stroke="#868686" stroke-width="2"/>
<path d="M1260.0 369.30H1407.4" stroke="#868686" stroke-width="2"/>
<path d="M1260.0 307.70H1407.4" stroke="#868686" stroke-width="2"/>
<path d="M1260.0 245.00H1407.4" stroke="#868686" stroke-width="2"/>
<path d="M1260.0 182.50H1407.4" stroke="#868686" stroke-width="2"/>
<path d="M1259.4 495.3H1409.0V120.0" fill="none" stroke="#202020" stroke-width="1.1"/><rect x="1260.0" y="120.4" width="147.40" height="373.20" fill="none" stroke="#949494" stroke-width="2.0"/>
<text x="1278.59" y="113.30" font-size="17.01" fill="#dcdcdc" textLength="89.47" lengthAdjust="spacingAndGlyphs">RGB Balance</text>
<path d="M1254 493.60H1260.0" stroke="#e4e4e4" stroke-width="1.7"/>
<text x="1239.67" y="500.50" font-size="17.01" fill="#e4e4e4" textLength="14.44" lengthAdjust="spacingAndGlyphs">-6</text>
<path d="M1254 432.00H1260.0" stroke="#e4e4e4" stroke-width="1.7"/>
<text x="1239.44" y="438.90" font-size="17.01" fill="#e4e4e4" textLength="14.44" lengthAdjust="spacingAndGlyphs">-4</text>
<path d="M1254 369.30H1260.0" stroke="#e4e4e4" stroke-width="1.7"/>
<text x="1239.78" y="376.20" font-size="17.01" fill="#e4e4e4" textLength="14.44" lengthAdjust="spacingAndGlyphs">-2</text>
<path d="M1254 307.70H1260.0" stroke="#e4e4e4" stroke-width="1.7"/>
<text transform="translate(1245.00 314.60) scale(0.9550 1)" font-size="17.01" fill="#e4e4e4">0</text>
<path d="M1254 245.00H1260.0" stroke="#e4e4e4" stroke-width="1.7"/>
<text transform="translate(1245.18 251.90) scale(0.9550 1)" font-size="17.01" fill="#e4e4e4">2</text>
<path d="M1254 182.50H1260.0" stroke="#e4e4e4" stroke-width="1.7"/>
<text transform="translate(1244.84 189.40) scale(0.9550 1)" font-size="17.01" fill="#e4e4e4">4</text>
<path d="M1254 120.40H1260.0" stroke="#e4e4e4" stroke-width="1.7"/>
<text transform="translate(1245.08 127.30) scale(0.9550 1)" font-size="17.01" fill="#e4e4e4">6</text>
<path d="M1260.0 493.6v6.6M1407.4 493.6v6.6" stroke="#e4e4e4" stroke-width="1.7"/>
<text x="1319.15" y="512.20" font-size="17.01" fill="#e4e4e4" textLength="27.10" lengthAdjust="spacingAndGlyphs">100</text>
<rect x="1274.05" y="305.95" width="37.95" height="171.50" fill="url(#gbR)" stroke="#040404" stroke-width="1.5"/>
<rect x="1313.00" y="275.15" width="37.95" height="30.40" fill="url(#gbG)" stroke="#040404" stroke-width="1.5"/>
<rect x="1351.95" y="133.15" width="37.95" height="172.40" fill="url(#gbB)" stroke="#040404" stroke-width="1.5"/>
<rect x="1470.0" y="120.3" width="420.85" height="366.95" fill="#232323"/><path d="M1471.8 487.05V122.2H1890.4499999999998" fill="none" stroke="#171717" stroke-width="1.1"/>
<path d="M1470.0 415.00H1890.85" stroke="#868686" stroke-width="2"/>
<path d="M1470.0 340.50H1890.85" stroke="#868686" stroke-width="2"/>
<path d="M1470.0 267.00H1890.85" stroke="#868686" stroke-width="2"/>
<path d="M1470.0 193.80H1890.85" stroke="#868686" stroke-width="2"/>
<path d="M1469.4 488.95H1892.4499999999998V119.89999999999999" fill="none" stroke="#202020" stroke-width="1.1"/><rect x="1470.0" y="120.3" width="420.85" height="366.95" fill="none" stroke="#949494" stroke-width="2.0"/>
<text x="1608.61" y="113.30" font-size="17.01" fill="#dcdcdc" textLength="116.60" lengthAdjust="spacingAndGlyphs">Gamma Log/Log</text>
<path d="M1464 487.25H1470.0" stroke="#e4e4e4" stroke-width="1.7"/>
<text x="1441.13" y="494.15" font-size="17.01" fill="#e4e4e4" textLength="22.58" lengthAdjust="spacingAndGlyphs">1.8</text>
<path d="M1464 415.00H1470.0" stroke="#e4e4e4" stroke-width="1.7"/>
<text transform="translate(1454.78 421.90) scale(0.9550 1)" font-size="17.01" fill="#e4e4e4">2</text>
<path d="M1464 340.50H1470.0" stroke="#e4e4e4" stroke-width="1.7"/>
<text x="1441.24" y="347.40" font-size="17.01" fill="#e4e4e4" textLength="22.58" lengthAdjust="spacingAndGlyphs">2.2</text>
<path d="M1464 267.00H1470.0" stroke="#e4e4e4" stroke-width="1.7"/>
<text x="1440.90" y="273.90" font-size="17.01" fill="#e4e4e4" textLength="22.58" lengthAdjust="spacingAndGlyphs">2.4</text>
<path d="M1464 193.80H1470.0" stroke="#e4e4e4" stroke-width="1.7"/>
<text x="1441.14" y="200.70" font-size="17.01" fill="#e4e4e4" textLength="22.58" lengthAdjust="spacingAndGlyphs">2.6</text>
<path d="M1464 120.30H1470.0" stroke="#e4e4e4" stroke-width="1.7"/>
<text x="1441.13" y="127.20" font-size="17.01" fill="#e4e4e4" textLength="22.58" lengthAdjust="spacingAndGlyphs">2.8</text>
<path d="M1470.00 487.25v6.6" stroke="#e4e4e4" stroke-width="1.7"/>
<text transform="translate(1465.48 512.20) scale(0.9550 1)" font-size="17.01" fill="#e4e4e4">0</text>
<path d="M1554.17 487.25v6.6" stroke="#e4e4e4" stroke-width="1.7"/>
<text x="1545.05" y="512.20" font-size="17.01" fill="#e4e4e4" textLength="18.06" lengthAdjust="spacingAndGlyphs">20</text>
<path d="M1638.34 487.25v6.6" stroke="#e4e4e4" stroke-width="1.7"/>
<text x="1629.44" y="512.20" font-size="17.01" fill="#e4e4e4" textLength="18.06" lengthAdjust="spacingAndGlyphs">40</text>
<path d="M1722.51 487.25v6.6" stroke="#e4e4e4" stroke-width="1.7"/>
<text x="1713.38" y="512.20" font-size="17.01" fill="#e4e4e4" textLength="18.06" lengthAdjust="spacingAndGlyphs">60</text>
<path d="M1806.68 487.25v6.6" stroke="#e4e4e4" stroke-width="1.7"/>
<text x="1797.61" y="512.20" font-size="17.01" fill="#e4e4e4" textLength="18.06" lengthAdjust="spacingAndGlyphs">80</text>
<path d="M1890.85 487.25v6.6" stroke="#e4e4e4" stroke-width="1.7"/>
<text x="1877.00" y="512.20" font-size="17.01" fill="#e4e4e4" textLength="27.10" lengthAdjust="spacingAndGlyphs">100</text>
<clipPath id="cpG"><rect x="1470.8" y="120.3" width="420.05" height="366.35"/></clipPath>
<g clip-path="url(#cpG)">
<polyline points="1470.0,675.4 1512.1,417.9 1554.2,366.3 1596.3,340.4 1638.3,320.0 1680.4,308.7 1722.5,300.2 1764.6,289.6 1806.7,279.6 1848.8,269.6 1890.8,312.5" fill="none" stroke="#8c8c8c" stroke-width="2.9" stroke-linejoin="miter"/>
<polyline points="1474.2,575.5 1478.4,540.0 1482.6,512.6 1486.8,489.1 1491.0,469.7 1495.3,454.5 1499.5,442.1 1503.7,431.7 1507.9,422.9 1512.1,415.4 1520.5,402.5 1528.9,392.3 1537.3,384.0 1545.8,377.1 1554.2,371.2 1566.8,363.9 1579.4,357.8 1596.3,351.2 1617.3,344.7 1638.3,339.5 1659.4,335.2 1680.4,331.7 1701.5,328.6 1722.5,326.0 1743.6,323.7 1764.6,321.6 1785.6,319.8 1806.7,318.2 1827.7,316.7 1848.8,315.4 1869.8,314.1 1890.4,313.0" fill="none" stroke="#ffff00" stroke-width="3.3" stroke-linejoin="round" transform="translate(0 -0.3)"/>
</g>
<text x="241.24" y="560.00" font-size="33.72" fill="#f2f2f2" textLength="52.52" lengthAdjust="spacingAndGlyphs">Avg</text>
<text x="301.16" y="560.00" font-size="33.72" fill="#f2f2f2" textLength="118.75" lengthAdjust="spacingAndGlyphs">dE2000:</text>
<text x="426.68" y="560.00" font-size="33.72" fill="#f2f2f2" textLength="44.73" lengthAdjust="spacingAndGlyphs">2.3</text>
<text x="677.44" y="560.00" font-size="33.72" fill="#f2f2f2" textLength="52.52" lengthAdjust="spacingAndGlyphs">Avg</text>
<text x="737.41" y="560.00" font-size="33.72" fill="#f2f2f2" textLength="63.89" lengthAdjust="spacingAndGlyphs">CCT:</text>
<text x="807.64" y="560.00" font-size="33.72" fill="#f2f2f2" textLength="72.52" lengthAdjust="spacingAndGlyphs">6955</text>
<text x="1074.67" y="560.00" font-size="33.72" fill="#f2f2f2" textLength="121.06" lengthAdjust="spacingAndGlyphs">Contrast</text>
<text x="1204.29" y="560.00" font-size="33.72" fill="#f2f2f2" textLength="86.22" lengthAdjust="spacingAndGlyphs">Ratio:</text>
<text x="1296.83" y="560.00" font-size="33.72" fill="#f2f2f2" textLength="72.21" lengthAdjust="spacingAndGlyphs">1289</text>
<text x="1499.44" y="560.00" font-size="33.72" fill="#f2f2f2" textLength="114.93" lengthAdjust="spacingAndGlyphs">Average</text>
<text x="1622.16" y="560.00" font-size="33.72" fill="#f2f2f2" textLength="125.33" lengthAdjust="spacingAndGlyphs">Gamma:</text>
<text x="1752.86" y="560.00" font-size="33.72" fill="#f2f2f2" textLength="81.74" lengthAdjust="spacingAndGlyphs">2.251</text>
<rect x="151.2" y="582.6" width="1766.8" height="152" fill="#000000"/>
<rect x="250.6" y="582.6" width="0.8" height="152" fill="#111111"/>
<rect x="275.6" y="590.6" width="127.6" height="58.6" fill="#040506"/>
<rect x="275.6" y="649" width="127.6" height="58.4" fill="#000000"/>
<rect x="275.6" y="590.6" width="127.6" height="116.8" fill="none" stroke="#f4f4f4" stroke-width="1.45"/>
<text transform="translate(335.81 724.80) scale(0.9550 1)" font-size="13.52" fill="#f2f2f2">0</text>
<rect x="424.6" y="590.6" width="127.6" height="58.6" fill="#1b1c1e"/>
<rect x="424.6" y="649" width="127.6" height="58.4" fill="#1c1c1c"/>
<rect x="424.6" y="590.6" width="127.6" height="116.8" fill="none" stroke="#f4f4f4" stroke-width="1.45"/>
<text x="480.98" y="724.80" font-size="13.52" fill="#f2f2f2" textLength="14.36" lengthAdjust="spacingAndGlyphs">10</text>
<rect x="573.6" y="590.6" width="127.6" height="58.6" fill="#343537"/>
<rect x="573.6" y="649" width="127.6" height="58.4" fill="#343434"/>
<rect x="573.6" y="590.6" width="127.6" height="116.8" fill="none" stroke="#f4f4f4" stroke-width="1.45"/>
<text x="630.15" y="724.80" font-size="13.52" fill="#f2f2f2" textLength="14.36" lengthAdjust="spacingAndGlyphs">20</text>
<rect x="722.6" y="590.6" width="127.6" height="58.6" fill="#4c4d4f"/>
<rect x="722.6" y="649" width="127.6" height="58.4" fill="#4d4d4d"/>
<rect x="722.6" y="590.6" width="127.6" height="116.8" fill="none" stroke="#f4f4f4" stroke-width="1.45"/>
<text x="779.23" y="724.80" font-size="13.52" fill="#f2f2f2" textLength="14.36" lengthAdjust="spacingAndGlyphs">30</text>
<rect x="871.6" y="590.6" width="127.6" height="58.6" fill="#67686b"/>
<rect x="871.6" y="649" width="127.6" height="58.4" fill="#676767"/>
<rect x="871.6" y="590.6" width="127.6" height="116.8" fill="none" stroke="#f4f4f4" stroke-width="1.45"/>
<text x="928.32" y="724.80" font-size="13.52" fill="#f2f2f2" textLength="14.36" lengthAdjust="spacingAndGlyphs">40</text>
<rect x="1020.6" y="590.6" width="127.6" height="58.6" fill="#7d8083"/>
<rect x="1020.6" y="649" width="127.6" height="58.4" fill="#828282"/>
<rect x="1020.6" y="590.6" width="127.6" height="116.8" fill="none" stroke="#f4f4f4" stroke-width="1.45"/>
<text x="1077.21" y="724.80" font-size="13.52" fill="#f2f2f2" textLength="14.36" lengthAdjust="spacingAndGlyphs">50</text>
<rect x="1169.6" y="590.6" width="127.6" height="58.6" fill="#96999d"/>
<rect x="1169.6" y="649" width="127.6" height="58.4" fill="#9b9b9b"/>
<rect x="1169.6" y="590.6" width="127.6" height="116.8" fill="none" stroke="#f4f4f4" stroke-width="1.45"/>
<text x="1226.14" y="724.80" font-size="13.52" fill="#f2f2f2" textLength="14.36" lengthAdjust="spacingAndGlyphs">60</text>
<rect x="1318.6" y="590.6" width="127.6" height="58.6" fill="#adb0b4"/>
<rect x="1318.6" y="649" width="127.6" height="58.4" fill="#b4b4b4"/>
<rect x="1318.6" y="590.6" width="127.6" height="116.8" fill="none" stroke="#f4f4f4" stroke-width="1.45"/>
<text x="1375.14" y="724.80" font-size="13.52" fill="#f2f2f2" textLength="14.36" lengthAdjust="spacingAndGlyphs">70</text>
<rect x="1467.6" y="590.6" width="127.6" height="58.6" fill="#c8cbd2"/>
<rect x="1467.6" y="649" width="127.6" height="58.4" fill="#cdcdcd"/>
<rect x="1467.6" y="590.6" width="127.6" height="116.8" fill="none" stroke="#f4f4f4" stroke-width="1.45"/>
<text x="1524.19" y="724.80" font-size="13.52" fill="#f2f2f2" textLength="14.36" lengthAdjust="spacingAndGlyphs">80</text>
<rect x="1616.6" y="590.6" width="127.6" height="58.6" fill="#e0e3ec"/>
<rect x="1616.6" y="649" width="127.6" height="58.4" fill="#e6e6e6"/>
<rect x="1616.6" y="590.6" width="127.6" height="116.8" fill="none" stroke="#f4f4f4" stroke-width="1.45"/>
<text x="1673.17" y="724.80" font-size="13.52" fill="#f2f2f2" textLength="14.36" lengthAdjust="spacingAndGlyphs">90</text>
<rect x="1765.6" y="590.6" width="127.6" height="58.6" fill="#f6faff"/>
<rect x="1765.6" y="649" width="127.6" height="58.4" fill="#fafafa"/>
<rect x="1765.6" y="590.6" width="127.6" height="116.8" fill="none" stroke="#f4f4f4" stroke-width="1.45"/>
<text x="1818.39" y="724.80" font-size="13.52" fill="#f2f2f2" textLength="21.54" lengthAdjust="spacingAndGlyphs">100</text>
<g transform="translate(266.2 635.4) rotate(-90)"><text x="-0.03" y="0.00" font-size="13.52" fill="#f2f2f2" textLength="41.43" lengthAdjust="spacingAndGlyphs">Actual</text>
</g>
<g transform="translate(266.2 701.4) rotate(-90)"><text x="-0.30" y="0.00" font-size="13.52" fill="#f2f2f2" textLength="39.20" lengthAdjust="spacingAndGlyphs">Target</text>
</g>
<text x="171.33" y="812.00" font-size="34.88" fill="#f2f2f2" textLength="109.71" lengthAdjust="spacingAndGlyphs">Current</text>
<text x="289.41" y="812.00" font-size="34.88" fill="#f2f2f2" textLength="117.63" lengthAdjust="spacingAndGlyphs">Reading</text>
<text x="172.70" y="861.20" font-size="27.33" fill="#f2f2f2" textLength="21.08" lengthAdjust="spacingAndGlyphs">x:</text>
<text x="198.94" y="861.20" font-size="27.33" fill="#f2f2f2" textLength="83.16" lengthAdjust="spacingAndGlyphs">0.3064</text>
<text x="331.23" y="861.20" font-size="27.33" fill="#f2f2f2" textLength="22.74" lengthAdjust="spacingAndGlyphs">y:</text>
<text x="358.44" y="861.20" font-size="27.33" fill="#f2f2f2" textLength="83.25" lengthAdjust="spacingAndGlyphs">0.3248</text>
<text x="170.88" y="900.50" font-size="27.33" fill="#f2f2f2" textLength="33.39" lengthAdjust="spacingAndGlyphs">u':</text>
<text x="208.24" y="900.50" font-size="27.33" fill="#f2f2f2" textLength="67.90" lengthAdjust="spacingAndGlyphs">0.195</text>
<text x="331.20" y="900.50" font-size="27.33" fill="#f2f2f2" textLength="29.04" lengthAdjust="spacingAndGlyphs">v':</text>
<text x="365.24" y="900.50" font-size="27.33" fill="#f2f2f2" textLength="82.88" lengthAdjust="spacingAndGlyphs">0.4651</text>
<text x="171.73" y="940.00" font-size="27.33" fill="#f2f2f2" textLength="83.00" lengthAdjust="spacingAndGlyphs">cd/m²:</text>
<text x="259.37" y="940.00" font-size="27.33" fill="#f2f2f2" textLength="98.83" lengthAdjust="spacingAndGlyphs">480.326</text>
<text x="172.32" y="979.20" font-size="27.33" fill="#f2f2f2" textLength="30.46" lengthAdjust="spacingAndGlyphs">ΔE</text>
<text x="209.92" y="979.20" font-size="27.33" fill="#f2f2f2" textLength="68.90" lengthAdjust="spacingAndGlyphs">2000:</text>
<text x="285.28" y="979.20" font-size="27.33" fill="#f2f2f2" textLength="52.15" lengthAdjust="spacingAndGlyphs">3.15</text>
<rect x="537.0" y="778.60" width="267.80" height="5.19" fill="url(#c0)" shape-rendering="crispEdges"/>
<rect x="537.0" y="782.59" width="267.80" height="5.19" fill="url(#c1)" shape-rendering="crispEdges"/>
<rect x="537.0" y="786.58" width="267.80" height="5.19" fill="url(#c2)" shape-rendering="crispEdges"/>
<rect x="537.0" y="790.56" width="267.80" height="5.19" fill="url(#c3)" shape-rendering="crispEdges"/>
<rect x="537.0" y="794.55" width="267.80" height="5.19" fill="url(#c4)" shape-rendering="crispEdges"/>
<rect x="537.0" y="798.54" width="267.80" height="5.19" fill="url(#c5)" shape-rendering="crispEdges"/>
<rect x="537.0" y="802.52" width="267.80" height="5.19" fill="url(#c6)" shape-rendering="crispEdges"/>
<rect x="537.0" y="806.51" width="267.80" height="5.19" fill="url(#c7)" shape-rendering="crispEdges"/>
<rect x="537.0" y="810.50" width="267.80" height="5.19" fill="url(#c8)" shape-rendering="crispEdges"/>
<rect x="537.0" y="814.49" width="267.80" height="5.19" fill="url(#c9)" shape-rendering="crispEdges"/>
<rect x="537.0" y="818.48" width="267.80" height="5.19" fill="url(#c10)" shape-rendering="crispEdges"/>
<rect x="537.0" y="822.46" width="267.80" height="5.19" fill="url(#c11)" shape-rendering="crispEdges"/>
<rect x="537.0" y="826.45" width="267.80" height="5.19" fill="url(#c12)" shape-rendering="crispEdges"/>
<rect x="537.0" y="830.44" width="267.80" height="5.19" fill="url(#c13)" shape-rendering="crispEdges"/>
<rect x="537.0" y="834.42" width="267.80" height="5.19" fill="url(#c14)" shape-rendering="crispEdges"/>
<rect x="537.0" y="838.41" width="267.80" height="5.19" fill="url(#c15)" shape-rendering="crispEdges"/>
<rect x="537.0" y="842.40" width="267.80" height="5.19" fill="url(#c16)" shape-rendering="crispEdges"/>
<rect x="537.0" y="846.39" width="267.80" height="5.19" fill="url(#c17)" shape-rendering="crispEdges"/>
<rect x="537.0" y="850.38" width="267.80" height="5.19" fill="url(#c18)" shape-rendering="crispEdges"/>
<rect x="537.0" y="854.36" width="267.80" height="5.19" fill="url(#c19)" shape-rendering="crispEdges"/>
<rect x="537.0" y="858.35" width="267.80" height="5.19" fill="url(#c20)" shape-rendering="crispEdges"/>
<rect x="537.0" y="862.34" width="267.80" height="5.19" fill="url(#c21)" shape-rendering="crispEdges"/>
<rect x="537.0" y="866.33" width="267.80" height="5.19" fill="url(#c22)" shape-rendering="crispEdges"/>
<rect x="537.0" y="870.31" width="267.80" height="5.19" fill="url(#c23)" shape-rendering="crispEdges"/>
<rect x="537.0" y="874.30" width="267.80" height="5.19" fill="url(#c24)" shape-rendering="crispEdges"/>
<rect x="537.0" y="878.29" width="267.80" height="5.19" fill="url(#c25)" shape-rendering="crispEdges"/>
<rect x="537.0" y="882.27" width="267.80" height="5.19" fill="url(#c26)" shape-rendering="crispEdges"/>
<rect x="537.0" y="886.26" width="267.80" height="5.19" fill="url(#c27)" shape-rendering="crispEdges"/>
<rect x="537.0" y="890.25" width="267.80" height="5.19" fill="url(#c28)" shape-rendering="crispEdges"/>
<rect x="537.0" y="894.24" width="267.80" height="5.19" fill="url(#c29)" shape-rendering="crispEdges"/>
<rect x="537.0" y="898.23" width="267.80" height="5.19" fill="url(#c30)" shape-rendering="crispEdges"/>
<rect x="537.0" y="902.21" width="267.80" height="5.19" fill="url(#c31)" shape-rendering="crispEdges"/>
<rect x="537.0" y="906.20" width="267.80" height="5.19" fill="url(#c32)" shape-rendering="crispEdges"/>
<rect x="537.0" y="910.19" width="267.80" height="5.19" fill="url(#c33)" shape-rendering="crispEdges"/>
<rect x="537.0" y="914.17" width="267.80" height="5.19" fill="url(#c34)" shape-rendering="crispEdges"/>
<rect x="537.0" y="918.16" width="267.80" height="5.19" fill="url(#c35)" shape-rendering="crispEdges"/>
<rect x="537.0" y="922.15" width="267.80" height="5.19" fill="url(#c36)" shape-rendering="crispEdges"/>
<rect x="537.0" y="926.14" width="267.80" height="5.19" fill="url(#c37)" shape-rendering="crispEdges"/>
<rect x="537.0" y="930.12" width="267.80" height="5.19" fill="url(#c38)" shape-rendering="crispEdges"/>
<rect x="537.0" y="934.11" width="267.80" height="5.19" fill="url(#c39)" shape-rendering="crispEdges"/>
<rect x="537.0" y="938.10" width="267.80" height="5.19" fill="url(#c40)" shape-rendering="crispEdges"/>
<rect x="537.0" y="942.09" width="267.80" height="5.19" fill="url(#c41)" shape-rendering="crispEdges"/>
<rect x="537.0" y="946.08" width="267.80" height="5.19" fill="url(#c42)" shape-rendering="crispEdges"/>
<rect x="537.0" y="950.06" width="267.80" height="5.19" fill="url(#c43)" shape-rendering="crispEdges"/>
<rect x="537.0" y="954.05" width="267.80" height="5.19" fill="url(#c44)" shape-rendering="crispEdges"/>
<rect x="537.0" y="958.04" width="267.80" height="5.19" fill="url(#c45)" shape-rendering="crispEdges"/>
<rect x="537.0" y="962.02" width="267.80" height="5.19" fill="url(#c46)" shape-rendering="crispEdges"/>
<rect x="537.0" y="966.01" width="267.80" height="3.99" fill="url(#c47)" shape-rendering="crispEdges"/>
<rect x="537.0" y="778.6" width="267.80" height="191.40" fill="none" stroke="#9a9a9a" stroke-width="1.4"/>
<text x="611.44" y="773.00" font-size="17.01" fill="#dcdcdc" textLength="81.19" lengthAdjust="spacingAndGlyphs">CIE 1931 xy</text>
<path d="M531 910.90H537.0" stroke="#e4e4e4" stroke-width="1.7"/>
<text x="500.01" y="917.30" font-size="17.01" fill="#e4e4e4" textLength="31.61" lengthAdjust="spacingAndGlyphs">0.32</text>
<path d="M531 833.60H537.0" stroke="#e4e4e4" stroke-width="1.7"/>
<text x="499.67" y="840.00" font-size="17.01" fill="#e4e4e4" textLength="31.61" lengthAdjust="spacingAndGlyphs">0.34</text>
<path d="M549.10 970.0v6.4" stroke="#e4e4e4" stroke-width="1.7"/>
<text x="533.36" y="995.60" font-size="17.01" fill="#e4e4e4" textLength="31.61" lengthAdjust="spacingAndGlyphs">0.29</text>
<path d="M602.50 970.0v6.4" stroke="#e4e4e4" stroke-width="1.7"/>
<text x="591.25" y="995.60" font-size="17.01" fill="#e4e4e4" textLength="22.58" lengthAdjust="spacingAndGlyphs">0.3</text>
<path d="M655.90 970.0v6.4" stroke="#e4e4e4" stroke-width="1.7"/>
<text x="640.17" y="995.60" font-size="17.01" fill="#e4e4e4" textLength="31.61" lengthAdjust="spacingAndGlyphs">0.31</text>
<path d="M709.30 970.0v6.4" stroke="#e4e4e4" stroke-width="1.7"/>
<text x="693.59" y="995.60" font-size="17.01" fill="#e4e4e4" textLength="31.61" lengthAdjust="spacingAndGlyphs">0.32</text>
<path d="M762.70 970.0v6.4" stroke="#e4e4e4" stroke-width="1.7"/>
<text x="746.94" y="995.60" font-size="17.01" fill="#e4e4e4" textLength="31.61" lengthAdjust="spacingAndGlyphs">0.33</text>
<clipPath id="cpC"><rect x="537.0" y="778.6" width="267.80" height="191.40"/></clipPath>
<g clip-path="url(#cpC)">
<path d="M570.4 972.5Q680 893.5 807 808.4" fill="none" stroke="#000000" stroke-width="3.2"/>
</g>
<rect x="663.2" y="865.4" width="14.4" height="15.2" fill="#ffffff" fill-opacity="0.85" stroke="#000000" stroke-width="1.5"/>
<circle cx="625.3" cy="902.0" r="4" fill="rgb(26,26,26)" stroke="#000000" stroke-width="1.1"/>
<circle cx="631.7" cy="897.8" r="4" fill="rgb(51,51,51)" stroke="#000000" stroke-width="1.1"/>
<circle cx="633.3" cy="898.2" r="4" fill="rgb(77,77,77)" stroke="#000000" stroke-width="1.1"/>
<circle cx="635.5" cy="897.8" r="4" fill="rgb(102,102,102)" stroke="#000000" stroke-width="1.1"/>
<circle cx="631.7" cy="899.7" r="4" fill="rgb(128,128,128)" stroke="#000000" stroke-width="1.1"/>
<circle cx="634.9" cy="897.4" r="4" fill="rgb(153,153,153)" stroke="#000000" stroke-width="1.1"/>
<circle cx="633.9" cy="898.6" r="4" fill="rgb(179,179,179)" stroke="#000000" stroke-width="1.1"/>
<circle cx="633.3" cy="898.9" r="4" fill="rgb(204,204,204)" stroke="#000000" stroke-width="1.1"/>
<circle cx="632.3" cy="898.9" r="4" fill="rgb(230,230,230)" stroke="#000000" stroke-width="1.1"/>
<circle cx="635.5" cy="890.0" r="4" fill="rgb(255,255,255)" stroke="#000000" stroke-width="1.1"/>
<rect x="816.0" y="745.2" width="909.00" height="28.8" fill="url(#gHdr)"/>
<rect x="816.0" y="745.2" width="10.8" height="28.8" fill="#000000"/>
<text transform="translate(940.74 765.50) scale(0.8462 1)" font-size="16.86" fill="#f4f4f4">0</text>
<text x="1018.91" y="765.50" font-size="16.86" fill="#f4f4f4" textLength="15.89" lengthAdjust="spacingAndGlyphs">10</text>
<text x="1090.08" y="765.50" font-size="16.86" fill="#f4f4f4" textLength="15.48" lengthAdjust="spacingAndGlyphs">20</text>
<text x="1161.04" y="765.50" font-size="16.86" fill="#f4f4f4" textLength="15.30" lengthAdjust="spacingAndGlyphs">30</text>
<text x="1232.03" y="765.50" font-size="16.86" fill="#f4f4f4" textLength="15.08" lengthAdjust="spacingAndGlyphs">40</text>
<text x="1302.57" y="765.50" font-size="16.86" fill="#f4f4f4" textLength="15.33" lengthAdjust="spacingAndGlyphs">50</text>
<text x="1373.19" y="765.50" font-size="16.86" fill="#f4f4f4" textLength="15.49" lengthAdjust="spacingAndGlyphs">60</text>
<text x="1443.97" y="765.50" font-size="16.86" fill="#f4f4f4" textLength="15.50" lengthAdjust="spacingAndGlyphs">70</text>
<text x="1514.86" y="765.50" font-size="16.86" fill="#f4f4f4" textLength="15.38" lengthAdjust="spacingAndGlyphs">80</text>
<text x="1585.59" y="765.50" font-size="16.86" fill="#f4f4f4" textLength="15.43" lengthAdjust="spacingAndGlyphs">90</text>
<text x="1655.96" y="765.50" font-size="16.86" fill="#f4f4f4" textLength="23.27" lengthAdjust="spacingAndGlyphs">100</text>
<rect x="816.0" y="773.90" width="909.00" height="27.23" fill="#404040"/>
<rect x="816.0" y="773.90" width="10.8" height="27.23" fill="url(#gRowH)"/>
<text x="830.86" y="794.50" font-size="16.86" fill="#f4f4f4" textLength="46.43" lengthAdjust="spacingAndGlyphs">x: CIE31</text>
<text x="940.77" y="794.50" font-size="16.86" fill="#f4f4f4" textLength="41.32" lengthAdjust="spacingAndGlyphs">0.2656</text>
<text x="1019.47" y="794.50" font-size="16.86" fill="#f4f4f4" textLength="41.29" lengthAdjust="spacingAndGlyphs">0.3045</text>
<text x="1090.25" y="794.50" font-size="16.86" fill="#f4f4f4" textLength="41.41" lengthAdjust="spacingAndGlyphs">0.3057</text>
<text x="1161.03" y="794.50" font-size="16.86" fill="#f4f4f4" textLength="41.25" lengthAdjust="spacingAndGlyphs">0.3060</text>
<text x="1231.81" y="794.50" font-size="16.86" fill="#f4f4f4" textLength="41.12" lengthAdjust="spacingAndGlyphs">0.3064</text>
<text x="1302.59" y="794.50" font-size="16.86" fill="#f4f4f4" textLength="41.41" lengthAdjust="spacingAndGlyphs">0.3057</text>
<text x="1373.37" y="794.50" font-size="16.86" fill="#f4f4f4" textLength="41.32" lengthAdjust="spacingAndGlyphs">0.3063</text>
<text x="1444.15" y="794.50" font-size="16.86" fill="#f4f4f4" textLength="41.39" lengthAdjust="spacingAndGlyphs">0.3061</text>
<text x="1514.93" y="794.50" font-size="16.86" fill="#f4f4f4" textLength="41.25" lengthAdjust="spacingAndGlyphs">0.3060</text>
<text x="1585.71" y="794.50" font-size="16.86" fill="#f4f4f4" textLength="41.31" lengthAdjust="spacingAndGlyphs">0.3058</text>
<text x="1656.49" y="794.50" font-size="16.86" fill="#f4f4f4" textLength="41.12" lengthAdjust="spacingAndGlyphs">0.3064</text>
<rect x="816.0" y="800.83" width="909.00" height="27.23" fill="#808080"/>
<rect x="816.0" y="800.83" width="10.8" height="27.23" fill="url(#gRowH)"/>
<text x="830.97" y="821.43" font-size="16.86" fill="#f4f4f4" textLength="46.32" lengthAdjust="spacingAndGlyphs">y: CIE31</text>
<text x="940.77" y="821.43" font-size="16.86" fill="#f4f4f4" textLength="41.32" lengthAdjust="spacingAndGlyphs">0.2686</text>
<text x="1019.47" y="821.43" font-size="16.86" fill="#f4f4f4" textLength="41.41" lengthAdjust="spacingAndGlyphs">0.3217</text>
<text x="1090.25" y="821.43" font-size="16.86" fill="#f4f4f4" textLength="41.31" lengthAdjust="spacingAndGlyphs">0.3228</text>
<text x="1161.03" y="821.43" font-size="16.86" fill="#f4f4f4" textLength="41.41" lengthAdjust="spacingAndGlyphs">0.3227</text>
<text x="1231.81" y="821.43" font-size="16.86" fill="#f4f4f4" textLength="41.31" lengthAdjust="spacingAndGlyphs">0.3228</text>
<text x="1302.59" y="821.43" font-size="16.86" fill="#f4f4f4" textLength="41.32" lengthAdjust="spacingAndGlyphs">0.3223</text>
<text x="1373.37" y="821.43" font-size="16.86" fill="#f4f4f4" textLength="41.37" lengthAdjust="spacingAndGlyphs">0.3229</text>
<text x="1444.15" y="821.43" font-size="16.86" fill="#f4f4f4" textLength="41.32" lengthAdjust="spacingAndGlyphs">0.3226</text>
<text x="1514.93" y="821.43" font-size="16.86" fill="#f4f4f4" textLength="41.29" lengthAdjust="spacingAndGlyphs">0.3225</text>
<text x="1585.71" y="821.43" font-size="16.86" fill="#f4f4f4" textLength="41.29" lengthAdjust="spacingAndGlyphs">0.3225</text>
<text x="1656.49" y="821.43" font-size="16.86" fill="#f4f4f4" textLength="41.31" lengthAdjust="spacingAndGlyphs">0.3248</text>
<rect x="816.0" y="827.76" width="909.00" height="27.23" fill="#404040"/>
<rect x="816.0" y="827.76" width="10.8" height="27.23" fill="url(#gRowH)"/>
<rect x="1441.4" y="827.96" width="70" height="26.73" fill="#f4f4f4"/>
<text transform="translate(830.65 848.36) scale(0.9550 1)" font-size="16.86" fill="#f4f4f4">Y</text>
<text x="940.77" y="848.36" font-size="16.86" fill="#f4f4f4" textLength="41.41" lengthAdjust="spacingAndGlyphs">0.3727</text>
<text x="1019.46" y="848.36" font-size="16.86" fill="#f4f4f4" textLength="41.42" lengthAdjust="spacingAndGlyphs">5.1032</text>
<text x="1089.74" y="848.36" font-size="16.86" fill="#f4f4f4" textLength="49.25" lengthAdjust="spacingAndGlyphs">15.5978</text>
<text x="1161.05" y="848.36" font-size="16.86" fill="#f4f4f4" textLength="48.81" lengthAdjust="spacingAndGlyphs">33.5422</text>
<text x="1231.65" y="848.36" font-size="16.86" fill="#f4f4f4" textLength="48.95" lengthAdjust="spacingAndGlyphs">60.8689</text>
<text x="1302.49" y="848.36" font-size="16.86" fill="#f4f4f4" textLength="48.94" lengthAdjust="spacingAndGlyphs">99.4267</text>
<text x="1372.86" y="848.36" font-size="16.86" fill="#f4f4f4" textLength="56.74" lengthAdjust="spacingAndGlyphs">147.7161</text>
<text x="1444.00" y="848.36" font-size="16.86" fill="#101010" textLength="56.40" lengthAdjust="spacingAndGlyphs">207.3282</text>
<text x="1514.78" y="848.36" font-size="16.86" fill="#f4f4f4" textLength="56.31" lengthAdjust="spacingAndGlyphs">283.4043</text>
<text x="1585.73" y="848.36" font-size="16.86" fill="#f4f4f4" textLength="56.12" lengthAdjust="spacingAndGlyphs">375.2855</text>
<text x="1656.71" y="848.36" font-size="16.86" fill="#f4f4f4" textLength="55.87" lengthAdjust="spacingAndGlyphs">480.3260</text>
<rect x="816.0" y="854.69" width="909.00" height="27.23" fill="#808080"/>
<rect x="816.0" y="854.69" width="10.8" height="27.23" fill="url(#gRowH)"/>
<text x="830.71" y="875.29" font-size="16.86" fill="#f4f4f4" textLength="49.17" lengthAdjust="spacingAndGlyphs">Target Y</text>
<text x="940.77" y="875.29" font-size="16.86" fill="#f4f4f4" textLength="41.25" lengthAdjust="spacingAndGlyphs">0.0000</text>
<text x="1019.69" y="875.29" font-size="16.86" fill="#f4f4f4" textLength="41.19" lengthAdjust="spacingAndGlyphs">4.9617</text>
<text x="1089.74" y="875.29" font-size="16.86" fill="#f4f4f4" textLength="49.33" lengthAdjust="spacingAndGlyphs">15.9011</text>
<text x="1161.05" y="875.29" font-size="16.86" fill="#f4f4f4" textLength="48.66" lengthAdjust="spacingAndGlyphs">34.7140</text>
<text x="1231.65" y="875.29" font-size="16.86" fill="#f4f4f4" textLength="48.97" lengthAdjust="spacingAndGlyphs">63.8201</text>
<text x="1302.09" y="875.29" font-size="16.86" fill="#f4f4f4" textLength="56.47" lengthAdjust="spacingAndGlyphs">103.6834</text>
<text x="1372.87" y="875.29" font-size="16.86" fill="#f4f4f4" textLength="56.67" lengthAdjust="spacingAndGlyphs">153.0063</text>
<text x="1444.00" y="875.29" font-size="16.86" fill="#f4f4f4" textLength="56.40" lengthAdjust="spacingAndGlyphs">213.8417</text>
<text x="1514.78" y="875.29" font-size="16.86" fill="#f4f4f4" textLength="56.24" lengthAdjust="spacingAndGlyphs">290.0340</text>
<text x="1585.73" y="875.29" font-size="16.86" fill="#f4f4f4" textLength="56.08" lengthAdjust="spacingAndGlyphs">380.0810</text>
<text x="1656.71" y="875.29" font-size="16.86" fill="#f4f4f4" textLength="55.87" lengthAdjust="spacingAndGlyphs">480.3260</text>
<rect x="816.0" y="881.62" width="909.00" height="27.23" fill="#404040"/>
<rect x="816.0" y="881.62" width="10.8" height="27.23" fill="url(#gRowH)"/>
<text x="830.30" y="902.22" font-size="16.86" fill="#f4f4f4" textLength="103.19" lengthAdjust="spacingAndGlyphs">Gamma Log/Log</text>
<text x="940.26" y="902.22" font-size="16.86" fill="#f4f4f4" textLength="41.84" lengthAdjust="spacingAndGlyphs">1.2778</text>
<text x="1018.96" y="902.22" font-size="16.86" fill="#f4f4f4" textLength="41.82" lengthAdjust="spacingAndGlyphs">1.9905</text>
<text x="1090.10" y="902.22" font-size="16.86" fill="#f4f4f4" textLength="41.45" lengthAdjust="spacingAndGlyphs">2.1295</text>
<text x="1160.88" y="902.22" font-size="16.86" fill="#f4f4f4" textLength="41.47" lengthAdjust="spacingAndGlyphs">2.1988</text>
<text x="1231.66" y="902.22" font-size="16.86" fill="#f4f4f4" textLength="41.45" lengthAdjust="spacingAndGlyphs">2.2545</text>
<text x="1302.44" y="902.22" font-size="16.86" fill="#f4f4f4" textLength="41.57" lengthAdjust="spacingAndGlyphs">2.2852</text>
<text x="1373.22" y="902.22" font-size="16.86" fill="#f4f4f4" textLength="41.27" lengthAdjust="spacingAndGlyphs">2.3084</text>
<text x="1444.00" y="902.22" font-size="16.86" fill="#f4f4f4" textLength="41.57" lengthAdjust="spacingAndGlyphs">2.3372</text>
<text x="1514.78" y="902.22" font-size="16.86" fill="#f4f4f4" textLength="41.27" lengthAdjust="spacingAndGlyphs">2.3644</text>
<text x="1585.56" y="902.22" font-size="16.86" fill="#f4f4f4" textLength="41.48" lengthAdjust="spacingAndGlyphs">2.3916</text>
<text x="1656.34" y="902.22" font-size="16.86" fill="#f4f4f4" textLength="41.53" lengthAdjust="spacingAndGlyphs">2.2749</text>
<rect x="816.0" y="908.55" width="909.00" height="27.23" fill="#808080"/>
<rect x="816.0" y="908.55" width="10.8" height="27.23" fill="url(#gRowH)"/>
<text x="830.40" y="929.15" font-size="16.86" fill="#f4f4f4" textLength="24.48" lengthAdjust="spacingAndGlyphs">CCT</text>
<text x="940.27" y="929.15" font-size="16.86" fill="#f4f4f4" textLength="71.44" lengthAdjust="spacingAndGlyphs">13524.0000</text>
<text x="1019.31" y="929.15" font-size="16.86" fill="#f4f4f4" textLength="63.68" lengthAdjust="spacingAndGlyphs">7053.0000</text>
<text x="1090.10" y="929.15" font-size="16.86" fill="#f4f4f4" textLength="63.67" lengthAdjust="spacingAndGlyphs">6964.0000</text>
<text x="1160.88" y="929.15" font-size="16.86" fill="#f4f4f4" textLength="63.67" lengthAdjust="spacingAndGlyphs">6951.0000</text>
<text x="1231.66" y="929.15" font-size="16.86" fill="#f4f4f4" textLength="63.67" lengthAdjust="spacingAndGlyphs">6923.0000</text>
<text x="1302.44" y="929.15" font-size="16.86" fill="#f4f4f4" textLength="63.67" lengthAdjust="spacingAndGlyphs">6972.0000</text>
<text x="1373.22" y="929.15" font-size="16.86" fill="#f4f4f4" textLength="63.67" lengthAdjust="spacingAndGlyphs">6928.0000</text>
<text x="1444.00" y="929.15" font-size="16.86" fill="#f4f4f4" textLength="63.67" lengthAdjust="spacingAndGlyphs">6943.0000</text>
<text x="1514.78" y="929.15" font-size="16.86" fill="#f4f4f4" textLength="63.67" lengthAdjust="spacingAndGlyphs">6953.0000</text>
<text x="1585.56" y="929.15" font-size="16.86" fill="#f4f4f4" textLength="63.67" lengthAdjust="spacingAndGlyphs">6964.0000</text>
<text x="1656.34" y="929.15" font-size="16.86" fill="#f4f4f4" textLength="63.67" lengthAdjust="spacingAndGlyphs">6901.0000</text>
<rect x="816.0" y="935.48" width="909.00" height="27.23" fill="#404040"/>
<rect x="816.0" y="935.48" width="10.8" height="27.23" fill="url(#gRowH)"/>
<text x="830.61" y="956.08" font-size="16.86" fill="#f4f4f4" textLength="50.30" lengthAdjust="spacingAndGlyphs">ΔE 2000</text>
<text x="940.77" y="956.08" font-size="16.86" fill="#f4f4f4" textLength="41.12" lengthAdjust="spacingAndGlyphs">0.8304</text>
<text x="1019.47" y="956.08" font-size="16.86" fill="#f4f4f4" textLength="41.31" lengthAdjust="spacingAndGlyphs">0.9808</text>
<text x="1089.74" y="956.08" font-size="16.86" fill="#f4f4f4" textLength="41.64" lengthAdjust="spacingAndGlyphs">1.2014</text>
<text x="1160.52" y="956.08" font-size="16.86" fill="#f4f4f4" textLength="41.89" lengthAdjust="spacingAndGlyphs">1.5649</text>
<text x="1231.30" y="956.08" font-size="16.86" fill="#f4f4f4" textLength="41.84" lengthAdjust="spacingAndGlyphs">1.9363</text>
<text x="1302.44" y="956.08" font-size="16.86" fill="#f4f4f4" textLength="41.57" lengthAdjust="spacingAndGlyphs">2.4142</text>
<text x="1373.22" y="956.08" font-size="16.86" fill="#f4f4f4" textLength="41.47" lengthAdjust="spacingAndGlyphs">2.4408</text>
<text x="1444.00" y="956.08" font-size="16.86" fill="#f4f4f4" textLength="41.47" lengthAdjust="spacingAndGlyphs">2.7538</text>
<text x="1514.95" y="956.08" font-size="16.86" fill="#f4f4f4" textLength="41.31" lengthAdjust="spacingAndGlyphs">3.0426</text>
<text x="1585.72" y="956.08" font-size="16.86" fill="#f4f4f4" textLength="41.40" lengthAdjust="spacingAndGlyphs">3.3197</text>
<text x="1656.50" y="956.08" font-size="16.86" fill="#f4f4f4" textLength="41.40" lengthAdjust="spacingAndGlyphs">3.1487</text>
<rect x="816.0" y="962.41" width="909.00" height="27.23" fill="#808080"/>
<rect x="816.0" y="962.41" width="10.8" height="27.23" fill="url(#gRowH)"/>
<text x="830.48" y="983.01" font-size="16.86" fill="#f4f4f4" textLength="34.58" lengthAdjust="spacingAndGlyphs">dEITP</text>
<text x="940.61" y="983.01" font-size="16.86" fill="#f4f4f4" textLength="48.98" lengthAdjust="spacingAndGlyphs">77.2361</text>
<text x="1019.48" y="983.01" font-size="16.86" fill="#f4f4f4" textLength="41.40" lengthAdjust="spacingAndGlyphs">3.6192</text>
<text x="1090.26" y="983.01" font-size="16.86" fill="#f4f4f4" textLength="41.40" lengthAdjust="spacingAndGlyphs">3.4832</text>
<text x="1161.25" y="983.01" font-size="16.86" fill="#f4f4f4" textLength="41.19" lengthAdjust="spacingAndGlyphs">4.1292</text>
<text x="1232.03" y="983.01" font-size="16.86" fill="#f4f4f4" textLength="41.19" lengthAdjust="spacingAndGlyphs">4.7447</text>
<text x="1302.81" y="983.01" font-size="16.86" fill="#f4f4f4" textLength="41.10" lengthAdjust="spacingAndGlyphs">4.9703</text>
<text x="1373.59" y="983.01" font-size="16.86" fill="#f4f4f4" textLength="41.07" lengthAdjust="spacingAndGlyphs">4.5125</text>
<text x="1444.37" y="983.01" font-size="16.86" fill="#f4f4f4" textLength="41.07" lengthAdjust="spacingAndGlyphs">4.5275</text>
<text x="1515.15" y="983.01" font-size="16.86" fill="#f4f4f4" textLength="40.90" lengthAdjust="spacingAndGlyphs">4.3944</text>
<text x="1585.93" y="983.01" font-size="16.86" fill="#f4f4f4" textLength="41.15" lengthAdjust="spacingAndGlyphs">4.2899</text>
<text x="1656.51" y="983.01" font-size="16.86" fill="#f4f4f4" textLength="41.30" lengthAdjust="spacingAndGlyphs">3.8288</text>
</g>
<g id="bottombar">
<rect x="150" y="1011.2" width="1770" height="46.8" fill="url(#gBot)"/>
<rect x="151.0" y="1011.1" width="112.4" height="45.6" rx="3.2" fill="#a4a4a4"/>
<rect x="152.4" y="1012.6" width="109.6" height="43.4" rx="2.4" fill="url(#gSw)"/>
<rect x="154.6" y="1015" width="105.2" height="26.8" rx="2.4" fill="rgb(0,0,0)" stroke="#505050" stroke-width="0.9"/>
<rect x="265.0" y="1011.1" width="112.4" height="45.6" rx="3.2" fill="#a4a4a4"/>
<rect x="266.4" y="1012.6" width="109.6" height="43.4" rx="2.4" fill="url(#gSw)"/>
<rect x="268.6" y="1015" width="105.2" height="26.8" rx="2.4" fill="rgb(26,26,26)" stroke="#505050" stroke-width="0.9"/>
<text x="316.53" y="1053.30" font-size="8.50" fill="#242424" textLength="9.03" lengthAdjust="spacingAndGlyphs">10</text>
<rect x="379.0" y="1011.1" width="112.4" height="45.6" rx="3.2" fill="#a4a4a4"/>
<rect x="380.4" y="1012.6" width="109.6" height="43.4" rx="2.4" fill="url(#gSw)"/>
<rect x="382.6" y="1015" width="105.2" height="26.8" rx="2.4" fill="rgb(51,51,51)" stroke="#505050" stroke-width="0.9"/>
<text x="430.64" y="1053.30" font-size="8.50" fill="#242424" textLength="9.03" lengthAdjust="spacingAndGlyphs">20</text>
<rect x="493.0" y="1011.1" width="112.4" height="45.6" rx="3.2" fill="#a4a4a4"/>
<rect x="494.4" y="1012.6" width="109.6" height="43.4" rx="2.4" fill="url(#gSw)"/>
<rect x="496.6" y="1015" width="105.2" height="26.8" rx="2.4" fill="rgb(76,76,76)" stroke="#505050" stroke-width="0.9"/>
<text x="544.69" y="1053.30" font-size="8.50" fill="#242424" textLength="9.03" lengthAdjust="spacingAndGlyphs">30</text>
<rect x="607.0" y="1011.1" width="112.4" height="45.6" rx="3.2" fill="#a4a4a4"/>
<rect x="608.4" y="1012.6" width="109.6" height="43.4" rx="2.4" fill="url(#gSw)"/>
<rect x="610.6" y="1015" width="105.2" height="26.8" rx="2.4" fill="rgb(102,102,102)" stroke="#505050" stroke-width="0.9"/>
<text x="658.75" y="1053.30" font-size="8.50" fill="#242424" textLength="9.03" lengthAdjust="spacingAndGlyphs">40</text>
<rect x="721.0" y="1011.1" width="112.4" height="45.6" rx="3.2" fill="#a4a4a4"/>
<rect x="722.4" y="1012.6" width="109.6" height="43.4" rx="2.4" fill="url(#gSw)"/>
<rect x="724.6" y="1015" width="105.2" height="26.8" rx="2.4" fill="rgb(128,128,128)" stroke="#505050" stroke-width="0.9"/>
<text x="772.68" y="1053.30" font-size="8.50" fill="#242424" textLength="9.03" lengthAdjust="spacingAndGlyphs">50</text>
<rect x="835.0" y="1011.1" width="112.4" height="45.6" rx="3.2" fill="#a4a4a4"/>
<rect x="836.4" y="1012.6" width="109.6" height="43.4" rx="2.4" fill="url(#gSw)"/>
<rect x="838.6" y="1015" width="105.2" height="26.8" rx="2.4" fill="rgb(153,153,153)" stroke="#505050" stroke-width="0.9"/>
<text x="886.64" y="1053.30" font-size="8.50" fill="#242424" textLength="9.03" lengthAdjust="spacingAndGlyphs">60</text>
<rect x="949.0" y="1011.1" width="112.4" height="45.6" rx="3.2" fill="#a4a4a4"/>
<rect x="950.4" y="1012.6" width="109.6" height="43.4" rx="2.4" fill="url(#gSw)"/>
<rect x="952.6" y="1015" width="105.2" height="26.8" rx="2.4" fill="rgb(178,178,178)" stroke="#505050" stroke-width="0.9"/>
<text x="1000.64" y="1053.30" font-size="8.50" fill="#242424" textLength="9.03" lengthAdjust="spacingAndGlyphs">70</text>
<rect x="1063.0" y="1011.1" width="112.4" height="45.6" rx="3.2" fill="#a4a4a4"/>
<rect x="1064.4" y="1012.6" width="109.6" height="43.4" rx="2.4" fill="url(#gSw)"/>
<rect x="1066.6" y="1015" width="105.2" height="26.8" rx="2.4" fill="rgb(204,204,204)" stroke="#505050" stroke-width="0.9"/>
<text x="1114.67" y="1053.30" font-size="8.50" fill="#242424" textLength="9.03" lengthAdjust="spacingAndGlyphs">80</text>
<rect x="1177.0" y="1011.1" width="112.4" height="45.6" rx="3.2" fill="#a4a4a4"/>
<rect x="1178.4" y="1012.6" width="109.6" height="43.4" rx="2.4" fill="url(#gSw)"/>
<rect x="1180.6" y="1015" width="105.2" height="26.8" rx="2.4" fill="rgb(230,230,230)" stroke="#505050" stroke-width="0.9"/>
<text x="1228.65" y="1053.30" font-size="8.50" fill="#242424" textLength="9.03" lengthAdjust="spacingAndGlyphs">90</text>
<rect x="1291.0" y="1011.4" width="112.4" height="45.4" rx="3" fill="url(#gAct)"/>
<rect x="1294.6" y="1015" width="105.2" height="27" rx="2.4" fill="#ffffff" stroke="#141414" stroke-width="0.9"/>
<text x="1340.42" y="1053.20" font-size="8.40" fill="#ffffff" font-weight="bold" textLength="13.38" lengthAdjust="spacingAndGlyphs">100</text>
<rect x="102.6" y="1043.6" width="120.4" height="16" fill="#ffffff" stroke="#9a9a9a" stroke-width="0.8"/>
<text x="106.07" y="1053.60" font-size="9.30" fill="#575757" textLength="112.91" lengthAdjust="spacingAndGlyphs">PASS.docx - Microsoft Word</text>
<rect x="1715" y="1035.2" width="101.6" height="26" rx="2.5" fill="url(#gNav)" stroke="#a8a8a8" stroke-width="0.7"/>
<rect x="1817.4" y="1035.2" width="101.6" height="26" rx="2.5" fill="url(#gNav)" stroke="#a8a8a8" stroke-width="0.7"/>
<rect x="1678.4" y="1025.8" width="35.8" height="36" rx="3" fill="#6c6c6c"/>
<rect x="1684.8" y="1030.6" width="21.4" height="21.6" rx="3.4" fill="#9a9a9a" stroke="#161616" stroke-width="1.7"/>
<rect x="1690.8" y="1036.6" width="10" height="9.4" fill="#000000"/>
<circle cx="1737.6" cy="1046.2" r="6.6" fill="#8e8e8e"/>
<path d="M1737 1042.6l-3 3.6 3 3.6M1741 1042.6l-3 3.6 3 3.6" stroke="#2a2a2a" stroke-width="1.1" fill="none"/>
<text x="1756.15" y="1052.40" font-size="18.60" fill="#262626" textLength="39.43" lengthAdjust="spacingAndGlyphs">Back</text>
<text x="1835.75" y="1052.40" font-size="18.60" fill="#262626" textLength="41.40" lengthAdjust="spacingAndGlyphs">Next</text>
<circle cx="1897.6" cy="1046.2" r="6.6" fill="#8e8e8e"/>
<path d="M1894.4 1042.6l3 3.6-3 3.6M1898.4 1042.6l3 3.6-3 3.6" stroke="#2a2a2a" stroke-width="1.1" fill="none"/>
<rect x="1715.0" y="1017.4" width="33.2" height="17.8" fill="#5c5c5c"/>
<circle cx="1731.6" cy="1027" r="6.2" fill="#747474"/>
<rect x="1748.8" y="1017.4" width="33.2" height="17.8" fill="#5c5c5c"/>
<circle cx="1765.4" cy="1027" r="6.2" fill="#747474"/>
<rect x="1782.7" y="1017.4" width="33.2" height="17.8" fill="#5c5c5c"/>
<circle cx="1799.3" cy="1027" r="6.2" fill="#747474"/>
<rect x="1816.5" y="1017.4" width="33.2" height="17.8" fill="#5c5c5c"/>
<circle cx="1833.1" cy="1027" r="6.2" fill="#747474"/>
<rect x="1850.4" y="1017.4" width="33.2" height="17.8" fill="#5c5c5c"/>
<circle cx="1867.0" cy="1027" r="6.2" fill="#747474"/>
</g>
<g id="watermark" opacity="0.6">
<g fill="none" stroke-linejoin="round" stroke-linecap="round">
<path d="M1632 996.6L1669.6 1004.6V1027.2L1641 1029.6L1697 1032.6L1656.8 1046.6L1634.6 1034.4Z" stroke="#f0e8e8" stroke-width="5.2"/>
<path d="M1632 996.6L1669.6 1004.6V1027.2L1641 1029.6L1697 1032.6L1656.8 1046.6L1634.6 1034.4Z" stroke="#a82c34" stroke-width="3.4"/>
<path d="M1642.6 1009.6L1653.4 1024L1674 996.2" stroke="#f4f4f4" stroke-width="4.8"/>
<path d="M1642.6 1009.6L1653.4 1024L1674 996.2" stroke="#3a3638" stroke-width="3"/>
</g>
<text x="1675.70" y="1025.00" font-size="27.60" fill="#b03642" font-weight="bold" textLength="146.53" lengthAdjust="spacingAndGlyphs" stroke="#f2e6e6" stroke-width="0.9" paint-order="stroke">NOTEBOOK</text>
<text x="1824.19" y="1025.00" font-size="27.60" fill="#383838" font-weight="bold" textLength="87.84" lengthAdjust="spacingAndGlyphs" stroke="#f0f0f0" stroke-width="1.6" paint-order="stroke">CHECK</text>
</g>
</svg>
</div>
</body>
</html>
